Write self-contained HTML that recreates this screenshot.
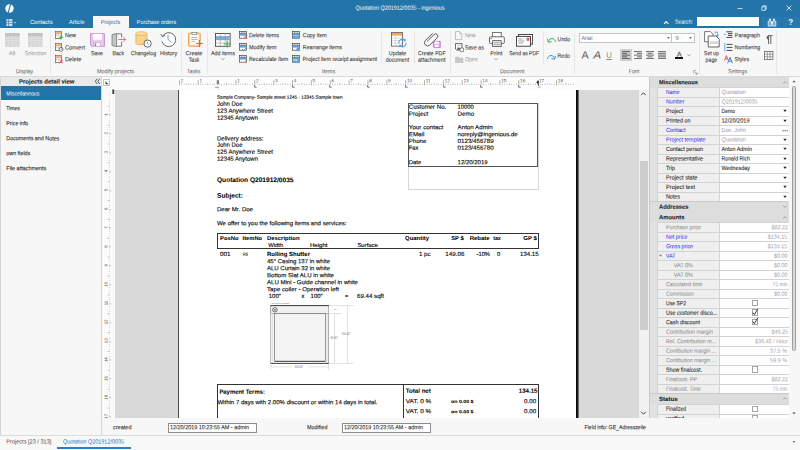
<!DOCTYPE html>
<html><head><meta charset="utf-8"><title>Quotation Q201912/0035 - ingenious</title>
<style>
html,body{margin:0;padding:0;width:800px;height:450px;overflow:hidden;background:#f4f4f4;font-family:"Liberation Sans", sans-serif;}
#app{position:relative;width:800px;height:450px;overflow:hidden;}
#app div,#app svg{position:absolute;box-sizing:border-box;}
#app .t{white-space:nowrap;}
</style></head><body><div id="app">
<div style="left:0px;top:0px;width:800px;height:28px;background:#2374a9;"></div>
<svg style="left:5px;top:3.5px" width="9" height="9" viewBox="0 0 9 9"><ellipse cx="4.5" cy="4.5" rx="4.2" ry="4.2" fill="#fff"/><path d="M5.6 0 L3.2 9" stroke="#2374a9" stroke-width="1.1"/></svg>
<div class="t" style="top:4px;height:7.8px;line-height:7.8px;font-size:6.0px;color:#fff;left:300px;width:200px;text-align:center;transform:translate(0px,0.85px) scaleX(0.9043) rotate(0.03deg);transform-origin:50% 50%;">Quotation Q201912/0035 - ingenious</div>
<svg style="left:736px;top:4px" width="8" height="8" viewBox="0 0 8 8"><path d="M1.5 4.5H6.5" stroke="#fff" stroke-width=".7"/></svg>
<svg style="left:760px;top:4px" width="8" height="8" viewBox="0 0 8 8"><path d="M1.8 2.8H5.2V6.4H1.8Z M2.8 2.8V1.8H6.2V5.4H5.2" fill="none" stroke="#fff" stroke-width=".7"/></svg>
<svg style="left:784.5px;top:4px" width="8" height="8" viewBox="0 0 8 8"><path d="M1.6 1.6L6.4 6.4M6.4 1.6L1.6 6.4" stroke="#fff" stroke-width=".8"/></svg>
<svg style="left:662px;top:18.5px" width="8" height="7" viewBox="0 0 8 7"><path d="M2 4.8L4.2 2.6L6.4 4.8" fill="none" stroke="#fff" stroke-width="1.1"/></svg>
<div class="t" style="top:18px;height:7.8px;line-height:7.8px;font-size:6.0px;color:#fff;left:675px;transform:translate(0px,0.85px) scaleX(0.8701) rotate(0.03deg);transform-origin:0 50%;">Search:</div>
<div style="left:697px;top:17.2px;width:61.5px;height:9.2px;background:#fff;"></div>
<div style="left:762px;top:17px;width:19px;height:10.5px;background:#2a79ae;"></div>
<div style="left:783px;top:17px;width:17px;height:10.5px;background:#2a79ae;"></div>
<svg style="left:766.5px;top:17.6px" width="10" height="9.5" viewBox="0 0 10 9.5"><path d="M2.2 .8h1.8v1.8h-1.8zM6 .8h1.8v1.8h-1.8z" fill="#fff"/><path d="M1.2 3.1h3.2v5h-3.2zM5.6 3.1h3.2v5h-3.2z" fill="rgba(255,255,255,.35)" stroke="#fff" stroke-width=".7"/><path d="M4.4 4h1.2v1.6h-1.2z" fill="#fff"/></svg>
<div class="t" style="top:17px;height:10.4px;line-height:10.4px;font-size:8px;color:#fff;font-weight:bold;left:690px;width:200px;text-align:center;transform:translate(0.6px,0.75px) rotate(0.03deg);transform-origin:50% 50%;">?</div>
<svg style="left:5.5px;top:17.5px" width="11" height="9" viewBox="0 0 11 9"><rect x=".5" y="1.1" width="5.9" height="6.9" fill="#d9e1e8"/><path d="M2.5 1.1V8M.5 3.3H6.4M.5 5.6H6.4" stroke="#2374a9" stroke-width=".6"/><path d="M8 4.3h2l-1 1.1z" fill="#fff"/></svg>
<div style="left:92.5px;top:16px;width:36.5px;height:12.5px;background:#f7f7f7;"></div>
<div class="t" style="top:19px;height:7.8px;line-height:7.8px;font-size:6.0px;color:#fff;left:30px;transform:translate(0px,0.05px) scaleX(0.9499) rotate(0.03deg);transform-origin:0 50%;">Contacts</div>
<div class="t" style="top:19px;height:7.8px;line-height:7.8px;font-size:6.0px;color:#fff;left:69px;transform:translate(0px,0.05px) scaleX(0.9297) rotate(0.03deg);transform-origin:0 50%;">Article</div>
<div class="t" style="top:19px;height:7.8px;line-height:7.8px;font-size:6.0px;color:#2a6fa5;left:100px;transform:translate(0.7px,0.05px) scaleX(0.8991) rotate(0.03deg);transform-origin:0 50%;">Projects</div>
<div class="t" style="top:19px;height:7.8px;line-height:7.8px;font-size:6.0px;color:#fff;left:136px;transform:translate(0.8px,0.05px) scaleX(0.8971) rotate(0.03deg);transform-origin:0 50%;">Purchase orders</div>
<div style="left:0px;top:28px;width:800px;height:48.5px;background:#f7f7f7;"></div>
<div style="left:0px;top:76px;width:800px;height:1px;background:#d9dadb;"></div>
<div style="left:49.8px;top:30.5px;width:1px;height:43px;background:#e6e6e6;"></div>
<div style="left:181.10000000000002px;top:30.5px;width:1px;height:43px;background:#e6e6e6;"></div>
<div style="left:206.70000000000002px;top:30.5px;width:1px;height:43px;background:#e6e6e6;"></div>
<div style="left:449.90000000000003px;top:30.5px;width:1px;height:43px;background:#e6e6e6;"></div>
<div style="left:573.9px;top:30.5px;width:1px;height:43px;background:#e6e6e6;"></div>
<div style="left:699.0999999999999px;top:30.5px;width:1px;height:43px;background:#e6e6e6;"></div>
<div style="left:776.3px;top:30.5px;width:1px;height:43px;background:#e6e6e6;"></div>
<div style="left:381.2px;top:30.5px;width:1px;height:33.5px;background:#e6e6e6;"></div>
<div style="left:413.90000000000003px;top:30.5px;width:1px;height:33.5px;background:#e6e6e6;"></div>
<div style="left:542.8px;top:30.5px;width:1px;height:33.5px;background:#e6e6e6;"></div>
<div class="t" style="top:68px;height:7.8px;line-height:7.8px;font-size:6.0px;color:#555;left:-76px;width:200px;text-align:center;transform:translate(0.6px,0.15px) scaleX(0.8635) rotate(0.03deg);transform-origin:50% 50%;">Display</div>
<div class="t" style="top:68px;height:7.8px;line-height:7.8px;font-size:6.0px;color:#555;left:15px;width:200px;text-align:center;transform:translate(0.5px,0.15px) scaleX(0.9217) rotate(0.03deg);transform-origin:50% 50%;">Modify projects</div>
<div class="t" style="top:68px;height:7.8px;line-height:7.8px;font-size:6.0px;color:#555;left:93px;width:200px;text-align:center;transform:translate(0.8px,0.15px) scaleX(0.8733) rotate(0.03deg);transform-origin:50% 50%;">Tasks</div>
<div class="t" style="top:68px;height:7.8px;line-height:7.8px;font-size:6.0px;color:#555;left:228px;width:200px;text-align:center;transform:translate(0.6px,0.15px) scaleX(0.886) rotate(0.03deg);transform-origin:50% 50%;">Items</div>
<div class="t" style="top:68px;height:7.8px;line-height:7.8px;font-size:6.0px;color:#555;left:412px;width:200px;text-align:center;transform:translate(0.2px,0.15px) scaleX(0.8918) rotate(0.03deg);transform-origin:50% 50%;">Document</div>
<div class="t" style="top:68px;height:7.8px;line-height:7.8px;font-size:6.0px;color:#555;left:534px;width:200px;text-align:center;transform:translate(0px,0.15px) scaleX(0.8822) rotate(0.03deg);transform-origin:50% 50%;">Font</div>
<div class="t" style="top:68px;height:7.8px;line-height:7.8px;font-size:6.0px;color:#555;left:637px;width:200px;text-align:center;transform:translate(0.6px,0.15px) scaleX(0.8761) rotate(0.03deg);transform-origin:50% 50%;">Settings</div>
<svg style="left:5px;top:33px" width="14.6" height="14" viewBox="0 0 14.6 14"><rect x="0" y="0" width="14.6" height="14" fill="#d4d4d4"/><rect x="0" y="0" width="14.6" height="3.08" fill="#c3c3c3"/><path d="M3.65 3.08V14" stroke="#e9e9e9" stroke-width=".5"/><path d="M7.3 3.08V14" stroke="#e9e9e9" stroke-width=".5"/><path d="M10.95 3.08V14" stroke="#e9e9e9" stroke-width=".5"/><path d="M0 5.264H14.6" stroke="#e9e9e9" stroke-width=".5"/><path d="M0 7.448H14.6" stroke="#e9e9e9" stroke-width=".5"/><path d="M0 9.632H14.6" stroke="#e9e9e9" stroke-width=".5"/><path d="M0 11.816H14.6" stroke="#e9e9e9" stroke-width=".5"/></svg>
<svg style="left:28px;top:33px" width="14.6" height="14" viewBox="0 0 14.6 14"><rect x="0" y="0" width="14.6" height="14" fill="#d4d4d4"/><rect x="0" y="0" width="14.6" height="3.08" fill="#c3c3c3"/><path d="M3.65 3.08V14" stroke="#e9e9e9" stroke-width=".5"/><path d="M7.3 3.08V14" stroke="#e9e9e9" stroke-width=".5"/><path d="M10.95 3.08V14" stroke="#e9e9e9" stroke-width=".5"/><path d="M0 5.264H14.6" stroke="#e9e9e9" stroke-width=".5"/><path d="M0 7.448H14.6" stroke="#e9e9e9" stroke-width=".5"/><path d="M0 9.632H14.6" stroke="#e9e9e9" stroke-width=".5"/><path d="M0 11.816H14.6" stroke="#e9e9e9" stroke-width=".5"/></svg>
<div class="t" style="top:50px;height:7.8px;line-height:7.8px;font-size:6.0px;color:#8e8e8e;left:-88px;width:200px;text-align:center;transform:translate(0px,0.35px) scaleX(0.9742) rotate(0.03deg);transform-origin:50% 50%;">All</div>
<div class="t" style="top:50px;height:7.8px;line-height:7.8px;font-size:6.0px;color:#8e8e8e;left:-65px;width:200px;text-align:center;transform:translate(0.5px,0.35px) scaleX(0.8709) rotate(0.03deg);transform-origin:50% 50%;">Selection</div>
<svg style="left:55px;top:31px" width="9" height="9" viewBox="0 0 9 9"><rect x=".4" y=".4" width="6.2" height="7.2" fill="#fff" stroke="#555" stroke-width=".7"/><rect x=".8" y=".8" width="5.4" height="2" fill="#f6b26b"/><path d="M.8 3.1H6.2M.8 4.8H4" stroke="#999" stroke-width=".5"/><path d="M6 4.2V8.4M3.9 6.3H8.1" stroke="#3db35a" stroke-width="1.1"/></svg>
<svg style="left:55px;top:43px" width="9" height="9" viewBox="0 0 9 9"><rect x=".4" y=".4" width="6.2" height="7.2" fill="#fff" stroke="#555" stroke-width=".7"/><rect x=".8" y=".8" width="5.4" height="2" fill="#f6b26b"/><path d="M.8 3.1H6.2M.8 4.8H4" stroke="#999" stroke-width=".5"/><circle cx="6" cy="6.3" r="2" fill="#fff" stroke="#444" stroke-width=".7"/><path d="M6 5.2V6.4H7" stroke="#444" stroke-width=".5" fill="none"/></svg>
<svg style="left:55px;top:54.8px" width="9" height="9" viewBox="0 0 9 9"><rect x=".4" y=".4" width="6.2" height="7.2" fill="#fff" stroke="#555" stroke-width=".7"/><rect x=".8" y=".8" width="5.4" height="2" fill="#f6b26b"/><path d="M.8 3.1H6.2M.8 4.8H4" stroke="#999" stroke-width=".5"/><path d="M4.4 4.8L7.8 8.2M7.8 4.8L4.4 8.2" stroke="#e8484e" stroke-width="1"/></svg>
<div class="t" style="top:32px;height:7.8px;line-height:7.8px;font-size:6.0px;color:#333;left:65px;transform:translate(0px,0.25px) scaleX(0.9155) rotate(0.03deg);transform-origin:0 50%;-webkit-text-stroke:.08px #333;">New</div>
<div class="t" style="top:44px;height:7.8px;line-height:7.8px;font-size:6.0px;color:#333;left:65px;transform:translate(0px,0.55px) scaleX(0.9517) rotate(0.03deg);transform-origin:0 50%;-webkit-text-stroke:.08px #333;">Convert</div>
<div class="t" style="top:56px;height:7.8px;line-height:7.8px;font-size:6.0px;color:#333;left:65px;transform:translate(0px,0.35px) scaleX(0.9514) rotate(0.03deg);transform-origin:0 50%;-webkit-text-stroke:.08px #333;">Delete</div>
<svg style="left:90px;top:32.6px" width="15" height="14.4" viewBox="0 0 15 14.4"><path d="M.6 .6H14.4V13.8H2.4L.6 12Z" fill="#e9c9ec" stroke="#c98fd0" stroke-width="1"/><rect x="3" y=".8" width="9" height="6" fill="#fff"/><rect x="3.6" y="9.4" width="6.6" height="4.2" fill="#fff" stroke="#c98fd0" stroke-width=".6"/><rect x="4.6" y="10.4" width="1.6" height="2.6" fill="#8c8c8c"/></svg>
<div class="t" style="top:50px;height:7.8px;line-height:7.8px;font-size:6.0px;color:#333;left:-3px;width:200px;text-align:center;transform:translate(0px,0.35px) scaleX(0.8913) rotate(0.03deg);transform-origin:50% 50%;-webkit-text-stroke:.08px #333;">Save</div>
<svg style="left:110.6px;top:32.6px" width="16" height="14.4" viewBox="0 0 16 14.4"><path d="M1 1.6L5.6 .6V13.8L1 12.6Z" fill="#c6c6c6" stroke="#6a6a6a" stroke-width=".7"/><path d="M5.6 .9H10.6V4.4M10.6 8.6V13.2H5.6" fill="#fff" stroke="#555" stroke-width=".8"/><path d="M7.4 6.5H14.6M12.4 4.3L14.8 6.5L12.4 8.7" fill="none" stroke="#ee5d63" stroke-width=".9"/></svg>
<div class="t" style="top:50px;height:7.8px;line-height:7.8px;font-size:6.0px;color:#333;left:18px;width:200px;text-align:center;transform:translate(0.3px,0.35px) scaleX(0.8618) rotate(0.03deg);transform-origin:50% 50%;-webkit-text-stroke:.08px #333;">Back</div>
<svg style="left:135.4px;top:31.4px" width="17" height="17" viewBox="0 0 17 17"><path d="M.9 2.6V12.4C.9 14.2 11.9 14.2 11.9 12.4V2.6Z" fill="#f8d48a" stroke="#eaa850" stroke-width=".8"/><ellipse cx="6.4" cy="2.6" rx="5.5" ry="1.9" fill="#fbe0a6" stroke="#eaa850" stroke-width=".8"/><circle cx="12.6" cy="12.6" r="3.6" fill="#fff" stroke="#555" stroke-width=".9"/><path d="M12.4 10.6V12.8L13.8 13.8" fill="none" stroke="#4a98d8" stroke-width=".8"/></svg>
<div class="t" style="top:50px;height:7.8px;line-height:7.8px;font-size:6.0px;color:#333;left:43px;width:200px;text-align:center;transform:translate(0.4px,0.35px) scaleX(0.8784) rotate(0.03deg);transform-origin:50% 50%;-webkit-text-stroke:.08px #333;">Changelog</div>
<svg style="left:160.4px;top:31.4px" width="17" height="17" viewBox="0 0 17 17"><path d="M2.6 5.2A7 7 0 1 1 2 10.6" fill="#fff" stroke="#555" stroke-width=".9"/><path d="M.8 3.2L2.6 5.6L5.2 4.4" fill="none" stroke="#555" stroke-width=".9"/><path d="M8 3.8V8.2L11.2 11.6" fill="none" stroke="#4a98d8" stroke-width=".9"/></svg>
<div class="t" style="top:50px;height:7.8px;line-height:7.8px;font-size:6.0px;color:#333;left:68px;width:200px;text-align:center;transform:translate(0.6px,0.35px) scaleX(0.9212) rotate(0.03deg);transform-origin:50% 50%;-webkit-text-stroke:.08px #333;">History</div>
<svg style="left:187.6px;top:32.4px" width="16" height="15.6" viewBox="0 0 16 15.6"><rect x=".6" y="1.2" width="11.6" height="13" rx=".6" fill="#fbe3bd" stroke="#ef9a3d" stroke-width="1"/><rect x="2.2" y="2.8" width="8.4" height="10" fill="#fff"/><rect x="4" y=".3" width="4.8" height="2.2" fill="#fff" stroke="#666" stroke-width=".6"/><path d="M3.4 5.4H9.4M3.4 7.4H9.4M3.4 9.4H7" stroke="#9a9a9a" stroke-width=".8"/><path d="M11.4 8V15M7.9 11.5H14.9" stroke="#3db35a" stroke-width="1.2"/></svg>
<div class="t" style="top:50px;height:7.8px;line-height:7.8px;font-size:6.0px;color:#333;left:94px;width:200px;text-align:center;transform:translate(0px,0.35px) scaleX(0.9436) rotate(0.03deg);transform-origin:50% 50%;-webkit-text-stroke:.08px #333;">Create</div>
<div class="t" style="top:56px;height:7.8px;line-height:7.8px;font-size:6.0px;color:#333;left:94px;width:200px;text-align:center;transform:translate(0px,0.65px) scaleX(0.8506) rotate(0.03deg);transform-origin:50% 50%;-webkit-text-stroke:.08px #333;">Task</div>
<svg style="left:215px;top:32.8px" width="17" height="15" viewBox="0 0 17 15"><rect x=".5" y=".5" width="14.6" height="12.8" fill="#fff" stroke="#4a4a4a" stroke-width=".9"/><rect x="1" y="3.4" width="13.6" height="3.4" fill="#6fb0e8"/><path d="M.5 3.4H15M.5 6.8H15M.5 10H15M5.4 .5V13.3M10.2 .5V13.3" stroke="#8a8a8a" stroke-width=".5" fill="none"/><path d="M12.2 7.4V14.6M8.6 11H15.8" stroke="#3db35a" stroke-width="1.2"/></svg>
<div class="t" style="top:50px;height:7.8px;line-height:7.8px;font-size:6.0px;color:#333;left:122px;width:200px;text-align:center;transform:translate(0.9px,0.35px) scaleX(0.8993) rotate(0.03deg);transform-origin:50% 50%;-webkit-text-stroke:.08px #333;">Add items</div>
<svg style="left:219.9px;top:57px" width="6" height="4" viewBox="0 0 6 4"><path d="M1.4 1.2L3 2.8L4.6 1.2" fill="none" stroke="#666" stroke-width=".6"/></svg>
<svg style="left:238.8px;top:31px" width="9.5" height="9" viewBox="0 0 9.5 9"><rect x=".4" y=".4" width="7.2" height="6.8" fill="#fff" stroke="#444" stroke-width=".7"/><rect x=".8" y="2.4" width="6.4" height="2.2" fill="#5aa2e0"/><path d="M.4 2.3H7.6M2.8 .4V2.3M5.2 .4V2.3" stroke="#444" stroke-width=".5"/><path d="M5 4.6L8.2 7.8M8.2 4.6L5 7.8" stroke="#e8484e" stroke-width=".9"/></svg>
<svg style="left:238.8px;top:43px" width="9.5" height="9" viewBox="0 0 9.5 9"><rect x=".4" y=".4" width="7.2" height="6.8" fill="#fff" stroke="#444" stroke-width=".7"/><rect x=".8" y="2.4" width="6.4" height="2.2" fill="#5aa2e0"/><path d="M.4 2.3H7.6M2.8 .4V2.3M5.2 .4V2.3" stroke="#444" stroke-width=".5"/><path d="M3.2 6L4.6 7.6L7.8 4" fill="none" stroke="#4a98d8" stroke-width="1"/></svg>
<svg style="left:238.8px;top:54.8px" width="9.5" height="9" viewBox="0 0 9.5 9"><rect x=".4" y=".4" width="7.2" height="6.8" fill="#fff" stroke="#444" stroke-width=".7"/><rect x=".8" y="2.4" width="6.4" height="2.2" fill="#5aa2e0"/><path d="M.4 2.3H7.6M2.8 .4V2.3M5.2 .4V2.3" stroke="#444" stroke-width=".5"/><path d="M5.4 8.2L6.4 4.8L7.6 8.2Z" fill="#ef9a3d"/></svg>
<div class="t" style="top:32px;height:7.8px;line-height:7.8px;font-size:6.0px;color:#333;left:249px;transform:translate(0px,0.25px) scaleX(0.8993) rotate(0.03deg);transform-origin:0 50%;-webkit-text-stroke:.08px #333;">Delete items</div>
<div class="t" style="top:44px;height:7.8px;line-height:7.8px;font-size:6.0px;color:#333;left:249px;transform:translate(0px,0.35px) scaleX(0.8994) rotate(0.03deg);transform-origin:0 50%;-webkit-text-stroke:.08px #333;">Modify item</div>
<div class="t" style="top:56px;height:7.8px;line-height:7.8px;font-size:6.0px;color:#333;left:249px;transform:translate(0px,0.05px) scaleX(0.8859) rotate(0.03deg);transform-origin:0 50%;-webkit-text-stroke:.08px #333;">Recalculate item</div>
<svg style="left:292px;top:31px" width="9.5" height="9" viewBox="0 0 9.5 9"><rect x=".4" y=".4" width="7.2" height="6.8" fill="#fff" stroke="#444" stroke-width=".7"/><rect x=".8" y="2.4" width="6.4" height="2.2" fill="#5aa2e0"/><path d="M.4 2.3H7.6M2.8 .4V2.3M5.2 .4V2.3" stroke="#444" stroke-width=".5"/><rect x="1" y="5" width="6.4" height="1.8" fill="#5aa2e0"/></svg>
<svg style="left:292px;top:43px" width="9.5" height="9" viewBox="0 0 9.5 9"><rect x=".4" y=".4" width="7.2" height="6.8" fill="#fff" stroke="#444" stroke-width=".7"/><rect x=".8" y="2.4" width="6.4" height="2.2" fill="#5aa2e0"/><path d="M.4 2.3H7.6M2.8 .4V2.3M5.2 .4V2.3" stroke="#444" stroke-width=".5"/><circle cx="6.2" cy="6.4" r="1.9" fill="#5aa2e0"/></svg>
<svg style="left:292px;top:54.8px" width="9.5" height="9" viewBox="0 0 9.5 9"><rect x=".4" y=".4" width="7.2" height="6.8" fill="#fff" stroke="#444" stroke-width=".7"/><rect x=".8" y="2.4" width="6.4" height="2.2" fill="#5aa2e0"/><path d="M.4 2.3H7.6M2.8 .4V2.3M5.2 .4V2.3" stroke="#444" stroke-width=".5"/><circle cx="6.2" cy="6.4" r="1.9" fill="#5aa2e0"/><rect x="1" y="5.4" width="3" height="1.6" fill="#5aa2e0"/></svg>
<div class="t" style="top:32px;height:7.8px;line-height:7.8px;font-size:6.0px;color:#333;left:302px;transform:translate(0.8px,0.25px) scaleX(0.8884) rotate(0.03deg);transform-origin:0 50%;-webkit-text-stroke:.08px #333;">Copy item</div>
<div class="t" style="top:44px;height:7.8px;line-height:7.8px;font-size:6.0px;color:#333;left:302px;transform:translate(0.8px,0.35px) scaleX(0.8837) rotate(0.03deg);transform-origin:0 50%;-webkit-text-stroke:.08px #333;">Rearrange items</div>
<div class="t" style="top:56px;height:7.8px;line-height:7.8px;font-size:6.0px;color:#333;left:302px;transform:translate(0.8px,0.05px) scaleX(0.8877) rotate(0.03deg);transform-origin:0 50%;-webkit-text-stroke:.08px #333;">Project item receipt assignment</div>
<svg style="left:390.6px;top:32px" width="16.5" height="16.5" viewBox="0 0 16.5 16.5"><rect x=".5" y=".5" width="11" height="13.6" fill="#fff" stroke="#555" stroke-width=".8"/><rect x="1" y="1" width="10" height="2.6" fill="#f6a55a"/><path d="M1 6H11M1 8.6H11M1 11.2H11M4.4 3.8V13.8" stroke="#b9b9b9" stroke-width=".5"/><path d="M7.8 11.4A3.6 3.6 0 0 1 14 8.4M15 10.6A3.6 3.6 0 0 1 8.8 13.6" fill="none" stroke="#4aa3e6" stroke-width="1.1"/><path d="M14.6 6.6V9.2H12zM8.2 15.4V12.8H10.8z" fill="#4aa3e6"/></svg>
<div class="t" style="top:50px;height:7.8px;line-height:7.8px;font-size:6.0px;color:#333;left:297px;width:200px;text-align:center;transform:translate(0.5px,0.35px) scaleX(0.8988) rotate(0.03deg);transform-origin:50% 50%;-webkit-text-stroke:.08px #333;">Update</div>
<div class="t" style="top:56px;height:7.8px;line-height:7.8px;font-size:6.0px;color:#333;left:297px;width:200px;text-align:center;transform:translate(0.5px,0.65px) scaleX(0.8953) rotate(0.03deg);transform-origin:50% 50%;-webkit-text-stroke:.08px #333;">document</div>
<svg style="left:424px;top:32px" width="17.5" height="16.5" viewBox="0 0 17.5 16.5"><path d="M3.2 9.4L10 2.6A2.2 2.2 0 0 1 13.2 5.8L5.6 13.2A3.2 3.2 0 0 1 1.2 8.6L8.6 1.4" fill="none" stroke="#5a5a5a" stroke-width="1"/><path d="M9.4 9.4H16.2V15.6H10.2L9.4 14.8Z" fill="#e5bde9" stroke="#b85cc2" stroke-width=".8"/><rect x="10.8" y="9.6" width="4" height="2" fill="#fff"/><rect x="11" y="13" width="3.4" height="2.2" fill="#fff"/></svg>
<div class="t" style="top:50px;height:7.8px;line-height:7.8px;font-size:6.0px;color:#333;left:331px;width:200px;text-align:center;transform:translate(0.8px,0.35px) scaleX(0.871) rotate(0.03deg);transform-origin:50% 50%;-webkit-text-stroke:.08px #333;">Create PDF</div>
<div class="t" style="top:56px;height:7.8px;line-height:7.8px;font-size:6.0px;color:#333;left:331px;width:200px;text-align:center;transform:translate(0.8px,0.65px) scaleX(0.9297) rotate(0.03deg);transform-origin:50% 50%;-webkit-text-stroke:.08px #333;">attachment</div>
<svg style="left:455px;top:31px" width="8" height="9.5" viewBox="0 0 8 9.5"><path d="M.5 .5H4.6L6.8 2.7V8.6H.5Z" fill="#f6f6f6" stroke="#ababab" stroke-width=".7"/><path d="M4.6 .5V2.7H6.8" fill="none" stroke="#ababab" stroke-width=".6"/></svg>
<svg style="left:454.6px;top:43px" width="9.5" height="9.5" viewBox="0 0 9.5 9.5"><path d="M.5 .5H7V7H1.6L.5 6Z" fill="#fff" stroke="#444" stroke-width=".8"/><rect x="2" y=".8" width="3.6" height="2.6" fill="#ddd"/><rect x="2.2" y="4.6" width="2.8" height="2.2" fill="#666"/><circle cx="6.8" cy="6.8" r="2" fill="#fff" stroke="#444" stroke-width=".7"/></svg>
<svg style="left:455px;top:55.6px" width="9" height="7.5" viewBox="0 0 9 7.5"><path d="M.4 1H3.2L4 2H8V6.8H.4Z" fill="#c9c9c9" stroke="#b5b5b5" stroke-width=".5"/></svg>
<div class="t" style="top:32px;height:7.8px;line-height:7.8px;font-size:6.0px;color:#8e8e8e;left:465px;transform:translate(0px,0.25px) scaleX(0.8739) rotate(0.03deg);transform-origin:0 50%;">New</div>
<div class="t" style="top:44px;height:7.8px;line-height:7.8px;font-size:6.0px;color:#333;left:465px;transform:translate(0px,0.55px) scaleX(0.8669) rotate(0.03deg);transform-origin:0 50%;-webkit-text-stroke:.08px #333;">Save as</div>
<div class="t" style="top:56px;height:7.8px;line-height:7.8px;font-size:6.0px;color:#8e8e8e;left:465px;transform:translate(0px,0.35px) scaleX(0.8511) rotate(0.03deg);transform-origin:0 50%;">Open</div>
<svg style="left:488.6px;top:32px" width="16.5" height="15.5" viewBox="0 0 16.5 15.5"><rect x="3.6" y=".5" width="8.6" height="5" fill="#fff" stroke="#555" stroke-width=".8"/><rect x=".5" y="4.8" width="14.8" height="6.6" rx=".8" fill="#fff" stroke="#555" stroke-width=".9"/><rect x="3.6" y="8.6" width="8.6" height="6" fill="#e4e4e4" stroke="#555" stroke-width=".8"/><path d="M5 10.6H10.8M5 12.6H10.8" stroke="#9a9a9a" stroke-width=".7"/><rect x="1.6" y="6" width="1.2" height="1.2" fill="#2f86d6"/></svg>
<div class="t" style="top:50px;height:7.8px;line-height:7.8px;font-size:6.0px;color:#333;left:396px;width:200px;text-align:center;transform:translate(0.3px,0.35px) scaleX(0.9722) rotate(0.03deg);transform-origin:50% 50%;-webkit-text-stroke:.08px #333;">Print</div>
<svg style="left:493.2px;top:57px" width="6" height="4" viewBox="0 0 6 4"><path d="M1.4 1.2L3 2.8L4.6 1.2" fill="none" stroke="#666" stroke-width=".6"/></svg>
<svg style="left:515.6px;top:33.6px" width="17.5" height="13.5" viewBox="0 0 17.5 13.5"><rect x="2.6" y=".5" width="14" height="9.6" fill="#fff" stroke="#333" stroke-width=".9"/><rect x=".5" y="2.4" width="14" height="9.8" fill="#fff" stroke="#333" stroke-width=".9"/><path d="M2.4 5H6.6M2.4 7H8.4M2.4 9H7.4" stroke="#8a8a8a" stroke-width=".8"/><rect x="10.6" y="3.6" width="2.8" height="3.2" fill="#f0585d"/></svg>
<div class="t" style="top:50px;height:7.8px;line-height:7.8px;font-size:6.0px;color:#333;left:424px;width:200px;text-align:center;transform:translate(0.2px,0.35px) scaleX(0.8406) rotate(0.03deg);transform-origin:50% 50%;-webkit-text-stroke:.08px #333;">Send as PDF</div>
<svg style="left:546.6px;top:36.4px" width="10" height="8" viewBox="0 0 10 8"><path d="M1.4 5.6C2.4 1.6 7.6 1.2 8.6 6" fill="none" stroke="#38b060" stroke-width="1"/><path d="M.6 2.8L1.2 6.2L4.6 5.6" fill="none" stroke="#38b060" stroke-width="1"/></svg>
<svg style="left:546.0px;top:52.6px" width="10" height="8" viewBox="0 0 10 8"><path d="M8.6 5.6C7.6 1.6 2.4 1.2 1.4 6" fill="none" stroke="#3c95dc" stroke-width="1"/><path d="M9.4 2.8L8.8 6.2L5.4 5.6" fill="none" stroke="#3c95dc" stroke-width="1"/></svg>
<div class="t" style="top:36px;height:7.8px;line-height:7.8px;font-size:6.0px;color:#333;left:557px;transform:translate(0.6px,0.35px) scaleX(0.8784) rotate(0.03deg);transform-origin:0 50%;-webkit-text-stroke:.08px #333;">Undo</div>
<div class="t" style="top:52px;height:7.8px;line-height:7.8px;font-size:6.0px;color:#333;left:557px;transform:translate(0.6px,0.65px) scaleX(0.8645) rotate(0.03deg);transform-origin:0 50%;-webkit-text-stroke:.08px #333;">Redo</div>
<div style="left:579px;top:33.4px;width:93.4px;height:9.8px;background:#fff;border:.7px solid #c4c4c4;"></div>
<div style="left:672.4px;top:33.4px;width:22.6px;height:9.8px;background:#fff;border:.7px solid #c4c4c4;border-left:none;"></div>
<div class="t" style="top:35px;height:7.8px;line-height:7.8px;font-size:6.0px;color:#6c6c6c;left:581px;transform:translate(0.4px,0.05px) scaleX(0.9155) rotate(0.03deg);transform-origin:0 50%;">Arial</div>
<div class="t" style="top:35px;height:7.8px;line-height:7.8px;font-size:6.0px;color:#6c6c6c;left:675px;transform:translate(0.4px,0.05px) scaleX(0.957) rotate(0.03deg);transform-origin:0 50%;">9</div>
<svg style="left:665.6px;top:36.4px" width="5" height="4" viewBox="0 0 5 4"><path d="M1 1.2H4L2.5 2.8Z" fill="#444"/></svg>
<svg style="left:688.2px;top:36.4px" width="5" height="4" viewBox="0 0 5 4"><path d="M1 1.2H4L2.5 2.8Z" fill="#444"/></svg>
<div class="t" style="top:48px;height:13.78px;line-height:13.78px;font-size:10.6px;color:#1a1a1a;left:485px;width:200px;text-align:center;transform:translate(0px,0.46px) scaleX(1.0172) rotate(0.03deg);transform-origin:50% 50%;-webkit-text-stroke:.2px #f7f7f7;">A</div>
<div class="t" style="top:48px;height:13.78px;line-height:13.78px;font-size:10.6px;color:#1a1a1a;font-style:italic;left:497px;width:200px;text-align:center;transform:translate(0.4px,0.46px) scaleX(1.0737) rotate(0.03deg);transform-origin:50% 50%;-webkit-text-stroke:.2px #f7f7f7;">A</div>
<div class="t" style="top:49px;height:10.92px;line-height:10.92px;font-size:8.4px;color:#8a8a8a;left:509px;width:200px;text-align:center;transform:translate(0px,0.89px) scaleX(0.9237) rotate(0.03deg);transform-origin:50% 50%;text-decoration:underline;">U</div>
<div style="left:620px;top:49px;width:12px;height:12px;background:#cfcfcf;"></div>
<svg style="left:622px;top:51.2px" width="9" height="8" viewBox="0 0 9 8"><path d="M0 0.6H8" stroke="#3a3a3a" stroke-width=".75"/><path d="M0 2.35H5" stroke="#3a3a3a" stroke-width=".75"/><path d="M0 4.1H8" stroke="#3a3a3a" stroke-width=".75"/><path d="M0 5.85H5" stroke="#3a3a3a" stroke-width=".75"/><path d="M0 7.6H8" stroke="#3a3a3a" stroke-width=".75"/></svg>
<svg style="left:633.8px;top:51.2px" width="9" height="8" viewBox="0 0 9 8"><path d="M0 0.6H8" stroke="#3a3a3a" stroke-width=".75"/><path d="M3 2.35H8" stroke="#3a3a3a" stroke-width=".75"/><path d="M0 4.1H8" stroke="#3a3a3a" stroke-width=".75"/><path d="M3 5.85H8" stroke="#3a3a3a" stroke-width=".75"/><path d="M0 7.6H8" stroke="#3a3a3a" stroke-width=".75"/></svg>
<svg style="left:645.8px;top:51.2px" width="9" height="8" viewBox="0 0 9 8"><path d="M0 0.6H8" stroke="#3a3a3a" stroke-width=".75"/><path d="M1.5 2.35H6.5" stroke="#3a3a3a" stroke-width=".75"/><path d="M0 4.1H8" stroke="#3a3a3a" stroke-width=".75"/><path d="M1.5 5.85H6.5" stroke="#3a3a3a" stroke-width=".75"/><path d="M0 7.6H8" stroke="#3a3a3a" stroke-width=".75"/></svg>
<svg style="left:657.8px;top:51.2px" width="9" height="8" viewBox="0 0 9 8"><path d="M0 0.6H8" stroke="#3a3a3a" stroke-width=".75"/><path d="M0 2.35H8" stroke="#3a3a3a" stroke-width=".75"/><path d="M0 4.1H8" stroke="#3a3a3a" stroke-width=".75"/><path d="M0 5.85H8" stroke="#3a3a3a" stroke-width=".75"/><path d="M0 7.6H8" stroke="#3a3a3a" stroke-width=".75"/></svg>
<div class="t" style="top:49px;height:9.36px;line-height:9.36px;font-size:7.2px;color:#3a3a3a;left:579px;width:200px;text-align:center;transform:translate(0.2px,0.87px) scaleX(1.0423) rotate(0.03deg);transform-origin:50% 50%;">A</div>
<div style="left:675.2px;top:57px;width:8px;height:2.2px;background:#111;"></div>
<svg style="left:686px;top:53px" width="6" height="4" viewBox="0 0 6 4"><path d="M1.4 1.2L3 2.8L4.6 1.2" fill="none" stroke="#666" stroke-width=".6"/></svg>
<svg style="left:692.6px;top:69.6px" width="5" height="5" viewBox="0 0 5 5"><path d="M.6 3.2V.6H3.2M2 2L4.2 4.2M4.2 2.4V4.2H2.4" fill="none" stroke="#666" stroke-width=".5"/></svg>
<svg style="left:704px;top:31.4px" width="17" height="17" viewBox="0 0 17 17"><path d="M.6 .6H6.4L9 3.2V10.8H.6Z" fill="#fff" stroke="#555" stroke-width=".8"/><path d="M4.2 5H12L15.2 8.2V16H4.2Z" fill="#fff" stroke="#555" stroke-width=".9"/><rect x="5.4" y="10.4" width="8.6" height="2.4" fill="#d4d4d4"/><path d="M10.2 1.2H13.4V5.2M12 3.8L13.4 5.4L14.8 3.8" fill="none" stroke="#3c95dc" stroke-width=".8"/></svg>
<div class="t" style="top:50px;height:7.8px;line-height:7.8px;font-size:6.0px;color:#333;left:611px;width:200px;text-align:center;transform:translate(0.4px,0.35px) scaleX(0.8526) rotate(0.03deg);transform-origin:50% 50%;-webkit-text-stroke:.08px #333;">Set up</div>
<div class="t" style="top:56px;height:7.8px;line-height:7.8px;font-size:6.0px;color:#333;left:611px;width:200px;text-align:center;transform:translate(0.4px,0.65px) scaleX(0.8683) rotate(0.03deg);transform-origin:50% 50%;-webkit-text-stroke:.08px #333;">page</div>
<svg style="left:724.2px;top:31.4px" width="9" height="8" viewBox="0 0 9 8"><path d="M2.4 .8H8.4M4 2.6H8.4M4 4.4H8.4M2.4 6.4H8.4" stroke="#333" stroke-width=".9"/><path d="M.4 2.4L1.8 3.5L.4 4.6Z" fill="#3c95dc"/></svg>
<svg style="left:724.2px;top:43.2px" width="9" height="9" viewBox="0 0 9 9"><path d="M2.6 1.4H8.4M2.6 4.4H8.4M2.6 7.4H8.4" stroke="#333" stroke-width=".9"/><path d="M.8 0V8.6" stroke="#3c95dc" stroke-width=".8"/></svg>
<svg style="left:724px;top:55px" width="10" height="9" viewBox="0 0 10 9"><path d="M.4 5.6L2.4 .6L4.4 5.6M1.2 3.8H3.6" fill="none" stroke="#e8484e" stroke-width=".9"/><path d="M3.6 8.2L6 2.4L8.4 8.2M4.6 6.2H7.4" fill="none" stroke="#2f86d6" stroke-width="1"/></svg>
<div class="t" style="top:32px;height:7.8px;line-height:7.8px;font-size:6.0px;color:#333;left:734px;transform:translate(0.8px,0.25px) scaleX(0.899) rotate(0.03deg);transform-origin:0 50%;-webkit-text-stroke:.08px #333;">Paragraph</div>
<div class="t" style="top:44px;height:7.8px;line-height:7.8px;font-size:6.0px;color:#333;left:734px;transform:translate(0.8px,0.35px) scaleX(0.8651) rotate(0.03deg);transform-origin:0 50%;-webkit-text-stroke:.08px #333;">Numbering</div>
<div class="t" style="top:56px;height:7.8px;line-height:7.8px;font-size:6.0px;color:#333;left:734px;transform:translate(0.8px,0.35px) scaleX(0.8688) rotate(0.03deg);transform-origin:0 50%;-webkit-text-stroke:.08px #333;">Styles</div>
<svg style="left:764.6px;top:34.6px" width="8" height="9.5" viewBox="0 0 8 9.5"><path d="M3.4 4.4A2 2 0 0 1 3.4 .6H7.6M3.6 .6V9M5.8 .6V9" fill="none" stroke="#555" stroke-width=".9"/><path d="M3.4 .6A2 2 0 0 0 3.4 4.4Z" fill="#555"/></svg>
<svg style="left:764px;top:51px" width="9.5" height="9.5" viewBox="0 0 9.5 9.5"><rect x=".5" y=".5" width="8.4" height="8" fill="#fff" stroke="#666" stroke-width=".8"/><path d="M.5 3.2H8.9M.5 5.8H8.9M3.3 .5V8.5M6.1 .5V8.5" stroke="#666" stroke-width=".6"/></svg>
<div style="left:0px;top:77px;width:102px;height:359px;background:#f7f7f7;"></div>
<div style="left:1px;top:77px;width:100.5px;height:9.6px;background:#e9e9e9;"></div>
<div style="left:101.3px;top:77px;width:0.8px;height:359px;background:#d5d5d5;"></div>
<div style="left:0px;top:77px;width:0.8px;height:359px;background:#d5d5d5;"></div>
<div class="t" style="top:78px;height:7.8px;line-height:7.8px;font-size:6.0px;color:#1a1a1a;font-weight:bold;left:19px;transform:translate(0px,0.45px) scaleX(0.9964) rotate(0.03deg);transform-origin:0 50%;-webkit-text-stroke:.08px #1a1a1a;">Projects detail view</div>
<svg style="left:93.6px;top:78px" width="7" height="7" viewBox="0 0 7 7"><path d="M3.2 .8L1.2 3.4L3.2 6M5.8 .8L3.8 3.4L5.8 6" fill="none" stroke="#222" stroke-width=".75"/></svg>
<div style="left:1px;top:86.3px;width:100.3px;height:14.1px;background:#2374a9;"></div>
<div class="t" style="top:90px;height:7.8px;line-height:7.8px;font-size:6.0px;color:#fff;left:6px;transform:translate(0.3px,0.55px) scaleX(0.8677) rotate(0.03deg);transform-origin:0 50%;">Miscellaneous</div>
<div class="t" style="top:105px;height:7.8px;line-height:7.8px;font-size:6.0px;color:#111;left:6px;transform:translate(0.3px,0.35px) scaleX(0.8372) rotate(0.03deg);transform-origin:0 50%;-webkit-text-stroke:.08px #111;">Times</div>
<div class="t" style="top:120px;height:7.8px;line-height:7.8px;font-size:6.0px;color:#111;left:6px;transform:translate(0.3px,0.35px) scaleX(0.8795) rotate(0.03deg);transform-origin:0 50%;-webkit-text-stroke:.08px #111;">Price info</div>
<div class="t" style="top:135px;height:7.8px;line-height:7.8px;font-size:6.0px;color:#111;left:6px;transform:translate(0.3px,0.35px) scaleX(0.8926) rotate(0.03deg);transform-origin:0 50%;-webkit-text-stroke:.08px #111;">Documents and Notes</div>
<div class="t" style="top:150px;height:7.8px;line-height:7.8px;font-size:6.0px;color:#111;left:6px;transform:translate(0.3px,0.35px) scaleX(0.8993) rotate(0.03deg);transform-origin:0 50%;-webkit-text-stroke:.08px #111;">own fields</div>
<div class="t" style="top:165px;height:7.8px;line-height:7.8px;font-size:6.0px;color:#111;left:6px;transform:translate(0.3px,0.35px) scaleX(0.9084) rotate(0.03deg);transform-origin:0 50%;-webkit-text-stroke:.08px #111;">File attachments</div>
<div style="left:102.2px;top:77px;width:546.5999999999999px;height:341px;background:#fbfbfb;"></div>
<div style="left:114.7px;top:89.6px;width:524.3px;height:328.4px;background:#d9d9d9;"></div>
<div style="left:639px;top:89.6px;width:9.8px;height:328.4px;background:#f1f1f1;"></div>
<div style="left:639.6px;top:161px;width:8.2px;height:169px;background:#cdcdcd;"></div>
<svg style="left:640.4px;top:91.4px" width="7" height="6" viewBox="0 0 7 6"><path d="M1.2 4.2L3.5 1.8L5.8 4.2" fill="none" stroke="#444" stroke-width="1"/></svg>
<svg style="left:640.4px;top:409.8px" width="7" height="6" viewBox="0 0 7 6"><path d="M1.2 1.8L3.5 4.2L5.8 1.8" fill="none" stroke="#444" stroke-width="1"/></svg>
<div style="left:103.2px;top:79.2px;width:6.4px;height:6.4px;background:#fff;border:.6px solid #c4c4c4;"></div>
<svg style="left:104.6px;top:80.6px" width="4" height="4" viewBox="0 0 4 4"><path d="M1 .6V2.8H3.2" fill="none" stroke="#111" stroke-width=".9"/></svg>
<div style="left:178px;top:89.6px;width:1.4px;height:328.4px;background:#4a4a4a;"></div>
<div style="left:179.4px;top:89.6px;width:396.8px;height:328.4px;background:#fff;"></div>
<div style="left:576.2px;top:89.6px;width:3.2px;height:328.4px;background:#000;background:linear-gradient(90deg,#000 0,#222 55%,#9a9a9a 100%);"></div>
<div style="left:179.4px;top:78.4px;width:396.6px;height:9.6px;background:#fdfdfd;"></div>
<svg style="left:179.4px;top:78.4px" width="396.6" height="10" viewBox="0 0 396.6 10"><path d="M0.38 2.2V7.2" stroke="#666" stroke-width=".5"/><rect x="2.44" y="5.9" width=".6" height=".8" fill="#777"/><rect x="4.79" y="5.9" width=".6" height=".8" fill="#777"/><rect x="7.15" y="5.9" width=".6" height=".8" fill="#777"/><path d="M9.81 5V7" stroke="#888" stroke-width=".5"/><rect x="11.87" y="5.9" width=".6" height=".8" fill="#777"/><rect x="14.23" y="5.9" width=".6" height=".8" fill="#777"/><rect x="16.58" y="5.9" width=".6" height=".8" fill="#777"/><path d="M19.24 2.2V7.2" stroke="#666" stroke-width=".5"/><rect x="21.30" y="5.9" width=".6" height=".8" fill="#777"/><rect x="23.65" y="5.9" width=".6" height=".8" fill="#777"/><rect x="26.01" y="5.9" width=".6" height=".8" fill="#777"/><path d="M28.67 5V7" stroke="#888" stroke-width=".5"/><rect x="30.73" y="5.9" width=".6" height=".8" fill="#777"/><rect x="33.08" y="5.9" width=".6" height=".8" fill="#777"/><rect x="35.44" y="5.9" width=".6" height=".8" fill="#777"/><path d="M38.10 2.2V7.2" stroke="#666" stroke-width=".5"/><rect x="40.16" y="5.9" width=".6" height=".8" fill="#777"/><rect x="42.52" y="5.9" width=".6" height=".8" fill="#777"/><rect x="44.87" y="5.9" width=".6" height=".8" fill="#777"/><path d="M47.53 5V7" stroke="#888" stroke-width=".5"/><rect x="49.59" y="5.9" width=".6" height=".8" fill="#777"/><rect x="51.95" y="5.9" width=".6" height=".8" fill="#777"/><rect x="54.30" y="5.9" width=".6" height=".8" fill="#777"/><path d="M56.96 2.2V7.2" stroke="#666" stroke-width=".5"/><rect x="59.02" y="5.9" width=".6" height=".8" fill="#777"/><rect x="61.38" y="5.9" width=".6" height=".8" fill="#777"/><rect x="63.73" y="5.9" width=".6" height=".8" fill="#777"/><path d="M66.39 5V7" stroke="#888" stroke-width=".5"/><rect x="68.45" y="5.9" width=".6" height=".8" fill="#777"/><rect x="70.81" y="5.9" width=".6" height=".8" fill="#777"/><rect x="73.16" y="5.9" width=".6" height=".8" fill="#777"/><path d="M75.82 2.2V7.2" stroke="#666" stroke-width=".5"/><rect x="77.88" y="5.9" width=".6" height=".8" fill="#777"/><rect x="80.23" y="5.9" width=".6" height=".8" fill="#777"/><rect x="82.59" y="5.9" width=".6" height=".8" fill="#777"/><path d="M85.25 5V7" stroke="#888" stroke-width=".5"/><rect x="87.31" y="5.9" width=".6" height=".8" fill="#777"/><rect x="89.67" y="5.9" width=".6" height=".8" fill="#777"/><rect x="92.02" y="5.9" width=".6" height=".8" fill="#777"/><path d="M94.68 2.2V7.2" stroke="#666" stroke-width=".5"/><rect x="96.74" y="5.9" width=".6" height=".8" fill="#777"/><rect x="99.10" y="5.9" width=".6" height=".8" fill="#777"/><rect x="101.45" y="5.9" width=".6" height=".8" fill="#777"/><path d="M104.11 5V7" stroke="#888" stroke-width=".5"/><rect x="106.17" y="5.9" width=".6" height=".8" fill="#777"/><rect x="108.53" y="5.9" width=".6" height=".8" fill="#777"/><rect x="110.88" y="5.9" width=".6" height=".8" fill="#777"/><path d="M113.54 2.2V7.2" stroke="#666" stroke-width=".5"/><rect x="115.60" y="5.9" width=".6" height=".8" fill="#777"/><rect x="117.96" y="5.9" width=".6" height=".8" fill="#777"/><rect x="120.31" y="5.9" width=".6" height=".8" fill="#777"/><path d="M122.97 5V7" stroke="#888" stroke-width=".5"/><rect x="125.03" y="5.9" width=".6" height=".8" fill="#777"/><rect x="127.39" y="5.9" width=".6" height=".8" fill="#777"/><rect x="129.74" y="5.9" width=".6" height=".8" fill="#777"/><path d="M132.40 2.2V7.2" stroke="#666" stroke-width=".5"/><rect x="134.46" y="5.9" width=".6" height=".8" fill="#777"/><rect x="136.82" y="5.9" width=".6" height=".8" fill="#777"/><rect x="139.17" y="5.9" width=".6" height=".8" fill="#777"/><path d="M141.83 5V7" stroke="#888" stroke-width=".5"/><rect x="143.89" y="5.9" width=".6" height=".8" fill="#777"/><rect x="146.25" y="5.9" width=".6" height=".8" fill="#777"/><rect x="148.60" y="5.9" width=".6" height=".8" fill="#777"/><path d="M151.26 2.2V7.2" stroke="#666" stroke-width=".5"/><rect x="153.32" y="5.9" width=".6" height=".8" fill="#777"/><rect x="155.68" y="5.9" width=".6" height=".8" fill="#777"/><rect x="158.03" y="5.9" width=".6" height=".8" fill="#777"/><path d="M160.69 5V7" stroke="#888" stroke-width=".5"/><rect x="162.75" y="5.9" width=".6" height=".8" fill="#777"/><rect x="165.11" y="5.9" width=".6" height=".8" fill="#777"/><rect x="167.46" y="5.9" width=".6" height=".8" fill="#777"/><path d="M170.12 2.2V7.2" stroke="#666" stroke-width=".5"/><rect x="172.18" y="5.9" width=".6" height=".8" fill="#777"/><rect x="174.54" y="5.9" width=".6" height=".8" fill="#777"/><rect x="176.89" y="5.9" width=".6" height=".8" fill="#777"/><path d="M179.55 5V7" stroke="#888" stroke-width=".5"/><rect x="181.61" y="5.9" width=".6" height=".8" fill="#777"/><rect x="183.97" y="5.9" width=".6" height=".8" fill="#777"/><rect x="186.32" y="5.9" width=".6" height=".8" fill="#777"/><path d="M188.98 2.2V7.2" stroke="#666" stroke-width=".5"/><rect x="191.04" y="5.9" width=".6" height=".8" fill="#777"/><rect x="193.40" y="5.9" width=".6" height=".8" fill="#777"/><rect x="195.75" y="5.9" width=".6" height=".8" fill="#777"/><path d="M198.41 5V7" stroke="#888" stroke-width=".5"/><rect x="200.47" y="5.9" width=".6" height=".8" fill="#777"/><rect x="202.83" y="5.9" width=".6" height=".8" fill="#777"/><rect x="205.18" y="5.9" width=".6" height=".8" fill="#777"/><path d="M207.84 2.2V7.2" stroke="#666" stroke-width=".5"/><rect x="209.90" y="5.9" width=".6" height=".8" fill="#777"/><rect x="212.26" y="5.9" width=".6" height=".8" fill="#777"/><rect x="214.61" y="5.9" width=".6" height=".8" fill="#777"/><path d="M217.27 5V7" stroke="#888" stroke-width=".5"/><rect x="219.33" y="5.9" width=".6" height=".8" fill="#777"/><rect x="221.69" y="5.9" width=".6" height=".8" fill="#777"/><rect x="224.04" y="5.9" width=".6" height=".8" fill="#777"/><path d="M226.70 2.2V7.2" stroke="#666" stroke-width=".5"/><rect x="228.76" y="5.9" width=".6" height=".8" fill="#777"/><rect x="231.12" y="5.9" width=".6" height=".8" fill="#777"/><rect x="233.47" y="5.9" width=".6" height=".8" fill="#777"/><path d="M236.13 5V7" stroke="#888" stroke-width=".5"/><rect x="238.19" y="5.9" width=".6" height=".8" fill="#777"/><rect x="240.55" y="5.9" width=".6" height=".8" fill="#777"/><rect x="242.90" y="5.9" width=".6" height=".8" fill="#777"/><path d="M245.56 2.2V7.2" stroke="#666" stroke-width=".5"/><rect x="247.62" y="5.9" width=".6" height=".8" fill="#777"/><rect x="249.98" y="5.9" width=".6" height=".8" fill="#777"/><rect x="252.33" y="5.9" width=".6" height=".8" fill="#777"/><path d="M254.99 5V7" stroke="#888" stroke-width=".5"/><rect x="257.05" y="5.9" width=".6" height=".8" fill="#777"/><rect x="259.41" y="5.9" width=".6" height=".8" fill="#777"/><rect x="261.76" y="5.9" width=".6" height=".8" fill="#777"/><path d="M264.42 2.2V7.2" stroke="#666" stroke-width=".5"/><rect x="266.48" y="5.9" width=".6" height=".8" fill="#777"/><rect x="268.84" y="5.9" width=".6" height=".8" fill="#777"/><rect x="271.19" y="5.9" width=".6" height=".8" fill="#777"/><path d="M273.85 5V7" stroke="#888" stroke-width=".5"/><rect x="275.91" y="5.9" width=".6" height=".8" fill="#777"/><rect x="278.27" y="5.9" width=".6" height=".8" fill="#777"/><rect x="280.62" y="5.9" width=".6" height=".8" fill="#777"/><path d="M283.28 2.2V7.2" stroke="#666" stroke-width=".5"/><rect x="285.34" y="5.9" width=".6" height=".8" fill="#777"/><rect x="287.70" y="5.9" width=".6" height=".8" fill="#777"/><rect x="290.05" y="5.9" width=".6" height=".8" fill="#777"/><path d="M292.71 5V7" stroke="#888" stroke-width=".5"/><rect x="294.77" y="5.9" width=".6" height=".8" fill="#777"/><rect x="297.13" y="5.9" width=".6" height=".8" fill="#777"/><rect x="299.48" y="5.9" width=".6" height=".8" fill="#777"/><path d="M302.14 2.2V7.2" stroke="#666" stroke-width=".5"/><rect x="304.20" y="5.9" width=".6" height=".8" fill="#777"/><rect x="306.56" y="5.9" width=".6" height=".8" fill="#777"/><rect x="308.91" y="5.9" width=".6" height=".8" fill="#777"/><path d="M311.57 5V7" stroke="#888" stroke-width=".5"/><rect x="313.63" y="5.9" width=".6" height=".8" fill="#777"/><rect x="315.99" y="5.9" width=".6" height=".8" fill="#777"/><rect x="318.34" y="5.9" width=".6" height=".8" fill="#777"/><path d="M321.00 2.2V7.2" stroke="#666" stroke-width=".5"/><rect x="323.06" y="5.9" width=".6" height=".8" fill="#777"/><rect x="325.42" y="5.9" width=".6" height=".8" fill="#777"/><rect x="327.77" y="5.9" width=".6" height=".8" fill="#777"/><path d="M330.43 5V7" stroke="#888" stroke-width=".5"/><rect x="332.49" y="5.9" width=".6" height=".8" fill="#777"/><rect x="334.85" y="5.9" width=".6" height=".8" fill="#777"/><rect x="337.20" y="5.9" width=".6" height=".8" fill="#777"/><path d="M339.86 2.2V7.2" stroke="#666" stroke-width=".5"/><rect x="341.92" y="5.9" width=".6" height=".8" fill="#777"/><rect x="344.28" y="5.9" width=".6" height=".8" fill="#777"/><rect x="346.63" y="5.9" width=".6" height=".8" fill="#777"/><path d="M349.29 5V7" stroke="#888" stroke-width=".5"/><rect x="351.35" y="5.9" width=".6" height=".8" fill="#777"/><rect x="353.71" y="5.9" width=".6" height=".8" fill="#777"/><rect x="356.06" y="5.9" width=".6" height=".8" fill="#777"/><path d="M358.72 2.2V7.2" stroke="#666" stroke-width=".5"/><rect x="360.78" y="5.9" width=".6" height=".8" fill="#777"/><rect x="363.14" y="5.9" width=".6" height=".8" fill="#777"/><rect x="365.49" y="5.9" width=".6" height=".8" fill="#777"/><path d="M368.15 5V7" stroke="#888" stroke-width=".5"/><rect x="370.21" y="5.9" width=".6" height=".8" fill="#777"/><rect x="372.57" y="5.9" width=".6" height=".8" fill="#777"/><rect x="374.92" y="5.9" width=".6" height=".8" fill="#777"/><path d="M377.58 2.2V7.2" stroke="#666" stroke-width=".5"/><rect x="379.64" y="5.9" width=".6" height=".8" fill="#777"/><rect x="382.00" y="5.9" width=".6" height=".8" fill="#777"/><rect x="384.35" y="5.9" width=".6" height=".8" fill="#777"/><path d="M387.01 5V7" stroke="#888" stroke-width=".5"/><rect x="389.07" y="5.9" width=".6" height=".8" fill="#777"/><rect x="391.43" y="5.9" width=".6" height=".8" fill="#777"/><rect x="393.78" y="5.9" width=".6" height=".8" fill="#777"/></svg>
<div class="t" style="top:78px;height:6.11px;line-height:6.11px;font-size:4.7px;color:#555;left:180px;transform:translate(0.58px,0.295px) rotate(0.03deg);transform-origin:0 50%;">2</div>
<div class="t" style="top:78px;height:6.11px;line-height:6.11px;font-size:4.7px;color:#555;left:199px;transform:translate(0.44px,0.295px) rotate(0.03deg);transform-origin:0 50%;">1</div>
<div class="t" style="top:78px;height:6.11px;line-height:6.11px;font-size:4.7px;color:#555;left:237px;transform:translate(0.16px,0.295px) rotate(0.03deg);transform-origin:0 50%;">1</div>
<div class="t" style="top:78px;height:6.11px;line-height:6.11px;font-size:4.7px;color:#555;left:256px;transform:translate(0.02px,0.295px) rotate(0.03deg);transform-origin:0 50%;">2</div>
<div class="t" style="top:78px;height:6.11px;line-height:6.11px;font-size:4.7px;color:#555;left:274px;transform:translate(0.88px,0.295px) rotate(0.03deg);transform-origin:0 50%;">3</div>
<div class="t" style="top:78px;height:6.11px;line-height:6.11px;font-size:4.7px;color:#555;left:293px;transform:translate(0.74px,0.295px) rotate(0.03deg);transform-origin:0 50%;">4</div>
<div class="t" style="top:78px;height:6.11px;line-height:6.11px;font-size:4.7px;color:#555;left:312px;transform:translate(0.6px,0.295px) rotate(0.03deg);transform-origin:0 50%;">5</div>
<div class="t" style="top:78px;height:6.11px;line-height:6.11px;font-size:4.7px;color:#555;left:331px;transform:translate(0.46px,0.295px) rotate(0.03deg);transform-origin:0 50%;">6</div>
<div class="t" style="top:78px;height:6.11px;line-height:6.11px;font-size:4.7px;color:#555;left:350px;transform:translate(0.32px,0.295px) rotate(0.03deg);transform-origin:0 50%;">7</div>
<div class="t" style="top:78px;height:6.11px;line-height:6.11px;font-size:4.7px;color:#555;left:369px;transform:translate(0.18px,0.295px) rotate(0.03deg);transform-origin:0 50%;">8</div>
<div class="t" style="top:78px;height:6.11px;line-height:6.11px;font-size:4.7px;color:#555;left:388px;transform:translate(0.04px,0.295px) rotate(0.03deg);transform-origin:0 50%;">9</div>
<div class="t" style="top:78px;height:6.11px;line-height:6.11px;font-size:4.7px;color:#555;left:406px;transform:translate(0.9px,0.295px) rotate(0.03deg);transform-origin:0 50%;">10</div>
<div class="t" style="top:78px;height:6.11px;line-height:6.11px;font-size:4.7px;color:#555;left:425px;transform:translate(0.76px,0.295px) rotate(0.03deg);transform-origin:0 50%;">11</div>
<div class="t" style="top:78px;height:6.11px;line-height:6.11px;font-size:4.7px;color:#555;left:444px;transform:translate(0.62px,0.295px) rotate(0.03deg);transform-origin:0 50%;">12</div>
<div class="t" style="top:78px;height:6.11px;line-height:6.11px;font-size:4.7px;color:#555;left:463px;transform:translate(0.48px,0.295px) rotate(0.03deg);transform-origin:0 50%;">13</div>
<div class="t" style="top:78px;height:6.11px;line-height:6.11px;font-size:4.7px;color:#555;left:482px;transform:translate(0.34px,0.295px) rotate(0.03deg);transform-origin:0 50%;">14</div>
<div class="t" style="top:78px;height:6.11px;line-height:6.11px;font-size:4.7px;color:#555;left:501px;transform:translate(0.2px,0.295px) rotate(0.03deg);transform-origin:0 50%;">15</div>
<div class="t" style="top:78px;height:6.11px;line-height:6.11px;font-size:4.7px;color:#555;left:520px;transform:translate(0.06px,0.295px) rotate(0.03deg);transform-origin:0 50%;">16</div>
<div class="t" style="top:78px;height:6.11px;line-height:6.11px;font-size:4.7px;color:#555;left:538px;transform:translate(0.92px,0.295px) rotate(0.03deg);transform-origin:0 50%;">17</div>
<div class="t" style="top:78px;height:6.11px;line-height:6.11px;font-size:4.7px;color:#555;left:557px;transform:translate(0.78px,0.295px) rotate(0.03deg);transform-origin:0 50%;">18</div>
<svg style="left:214.5px;top:79.4px" width="7" height="10" viewBox="0 0 7 10"><path d="M2.6 1.2H3.6V4.4L3.1 5.4L2.6 4.4Z" fill="#222"/><path d="M0 8.4H3.2M3.2 7.4V9.4" stroke="#555" stroke-width=".5"/></svg>
<svg style="left:535px;top:79.4px" width="7" height="10" viewBox="0 0 7 10"><path d="M1.4 3.2L3.2 1.6V5L1.4 3.4Z" fill="#222"/><rect x="3.1" y="1.6" width=".7" height="5.4" fill="#222"/><path d="M3 8.2H5.6" stroke="#555" stroke-width=".5"/></svg>
<svg style="left:254.02px;top:85.2px" width="4" height="3.4" viewBox="0 0 4 3.4"><path d="M.6 .2V2.2H2.6" fill="none" stroke="#333" stroke-width=".7"/></svg>
<svg style="left:291.74px;top:85.2px" width="4" height="3.4" viewBox="0 0 4 3.4"><path d="M.6 .2V2.2H2.6" fill="none" stroke="#333" stroke-width=".7"/></svg>
<svg style="left:329.46px;top:85.2px" width="4" height="3.4" viewBox="0 0 4 3.4"><path d="M.6 .2V2.2H2.6" fill="none" stroke="#333" stroke-width=".7"/></svg>
<svg style="left:367.18px;top:85.2px" width="4" height="3.4" viewBox="0 0 4 3.4"><path d="M.6 .2V2.2H2.6" fill="none" stroke="#333" stroke-width=".7"/></svg>
<svg style="left:404.90000000000003px;top:85.2px" width="4" height="3.4" viewBox="0 0 4 3.4"><path d="M.6 .2V2.2H2.6" fill="none" stroke="#333" stroke-width=".7"/></svg>
<svg style="left:442.62px;top:85.2px" width="4" height="3.4" viewBox="0 0 4 3.4"><path d="M.6 .2V2.2H2.6" fill="none" stroke="#333" stroke-width=".7"/></svg>
<svg style="left:480.34px;top:85.2px" width="4" height="3.4" viewBox="0 0 4 3.4"><path d="M.6 .2V2.2H2.6" fill="none" stroke="#333" stroke-width=".7"/></svg>
<svg style="left:518.06px;top:85.2px" width="4" height="3.4" viewBox="0 0 4 3.4"><path d="M.6 .2V2.2H2.6" fill="none" stroke="#333" stroke-width=".7"/></svg>
<svg style="left:103px;top:89.6px" width="11" height="328.4" viewBox="0 0 11 328.4"><rect x="6.2" y="1.88" width=".7" height=".5" fill="#888"/><rect x="6.2" y="4.23" width=".7" height=".5" fill="#888"/><rect x="6.2" y="8.95" width=".7" height=".5" fill="#888"/><rect x="6.2" y="11.31" width=".7" height=".5" fill="#888"/><rect x="6.2" y="13.66" width=".7" height=".5" fill="#888"/><path d="M4.6 16.27H7" stroke="#888" stroke-width=".5"/><rect x="6.2" y="18.38" width=".7" height=".5" fill="#888"/><rect x="6.2" y="20.73" width=".7" height=".5" fill="#888"/><rect x="6.2" y="23.09" width=".7" height=".5" fill="#888"/><rect x="6.2" y="27.81" width=".7" height=".5" fill="#888"/><rect x="6.2" y="30.17" width=".7" height=".5" fill="#888"/><rect x="6.2" y="32.52" width=".7" height=".5" fill="#888"/><path d="M4.6 35.13H7" stroke="#888" stroke-width=".5"/><rect x="6.2" y="37.24" width=".7" height=".5" fill="#888"/><rect x="6.2" y="39.59" width=".7" height=".5" fill="#888"/><rect x="6.2" y="41.95" width=".7" height=".5" fill="#888"/><rect x="6.2" y="46.67" width=".7" height=".5" fill="#888"/><rect x="6.2" y="49.03" width=".7" height=".5" fill="#888"/><rect x="6.2" y="51.38" width=".7" height=".5" fill="#888"/><path d="M4.6 53.99H7" stroke="#888" stroke-width=".5"/><rect x="6.2" y="56.10" width=".7" height=".5" fill="#888"/><rect x="6.2" y="58.46" width=".7" height=".5" fill="#888"/><rect x="6.2" y="60.81" width=".7" height=".5" fill="#888"/><rect x="6.2" y="65.53" width=".7" height=".5" fill="#888"/><rect x="6.2" y="67.88" width=".7" height=".5" fill="#888"/><rect x="6.2" y="70.24" width=".7" height=".5" fill="#888"/><path d="M4.6 72.85H7" stroke="#888" stroke-width=".5"/><rect x="6.2" y="74.96" width=".7" height=".5" fill="#888"/><rect x="6.2" y="77.31" width=".7" height=".5" fill="#888"/><rect x="6.2" y="79.67" width=".7" height=".5" fill="#888"/><rect x="6.2" y="84.39" width=".7" height=".5" fill="#888"/><rect x="6.2" y="86.75" width=".7" height=".5" fill="#888"/><rect x="6.2" y="89.10" width=".7" height=".5" fill="#888"/><path d="M4.6 91.71H7" stroke="#888" stroke-width=".5"/><rect x="6.2" y="93.82" width=".7" height=".5" fill="#888"/><rect x="6.2" y="96.18" width=".7" height=".5" fill="#888"/><rect x="6.2" y="98.53" width=".7" height=".5" fill="#888"/><rect x="6.2" y="103.25" width=".7" height=".5" fill="#888"/><rect x="6.2" y="105.61" width=".7" height=".5" fill="#888"/><rect x="6.2" y="107.96" width=".7" height=".5" fill="#888"/><path d="M4.6 110.57H7" stroke="#888" stroke-width=".5"/><rect x="6.2" y="112.68" width=".7" height=".5" fill="#888"/><rect x="6.2" y="115.04" width=".7" height=".5" fill="#888"/><rect x="6.2" y="117.39" width=".7" height=".5" fill="#888"/><rect x="6.2" y="122.11" width=".7" height=".5" fill="#888"/><rect x="6.2" y="124.47" width=".7" height=".5" fill="#888"/><rect x="6.2" y="126.82" width=".7" height=".5" fill="#888"/><path d="M4.6 129.43H7" stroke="#888" stroke-width=".5"/><rect x="6.2" y="131.54" width=".7" height=".5" fill="#888"/><rect x="6.2" y="133.90" width=".7" height=".5" fill="#888"/><rect x="6.2" y="136.25" width=".7" height=".5" fill="#888"/><rect x="6.2" y="140.97" width=".7" height=".5" fill="#888"/><rect x="6.2" y="143.33" width=".7" height=".5" fill="#888"/><rect x="6.2" y="145.68" width=".7" height=".5" fill="#888"/><path d="M4.6 148.29H7" stroke="#888" stroke-width=".5"/><rect x="6.2" y="150.40" width=".7" height=".5" fill="#888"/><rect x="6.2" y="152.76" width=".7" height=".5" fill="#888"/><rect x="6.2" y="155.11" width=".7" height=".5" fill="#888"/><rect x="6.2" y="159.83" width=".7" height=".5" fill="#888"/><rect x="6.2" y="162.19" width=".7" height=".5" fill="#888"/><rect x="6.2" y="164.54" width=".7" height=".5" fill="#888"/><path d="M4.6 167.15H7" stroke="#888" stroke-width=".5"/><rect x="6.2" y="169.26" width=".7" height=".5" fill="#888"/><rect x="6.2" y="171.62" width=".7" height=".5" fill="#888"/><rect x="6.2" y="173.97" width=".7" height=".5" fill="#888"/><rect x="6.2" y="178.69" width=".7" height=".5" fill="#888"/><rect x="6.2" y="181.05" width=".7" height=".5" fill="#888"/><rect x="6.2" y="183.40" width=".7" height=".5" fill="#888"/><path d="M4.6 186.01H7" stroke="#888" stroke-width=".5"/><rect x="6.2" y="188.12" width=".7" height=".5" fill="#888"/><rect x="6.2" y="190.48" width=".7" height=".5" fill="#888"/><rect x="6.2" y="192.83" width=".7" height=".5" fill="#888"/><rect x="6.2" y="197.55" width=".7" height=".5" fill="#888"/><rect x="6.2" y="199.91" width=".7" height=".5" fill="#888"/><rect x="6.2" y="202.26" width=".7" height=".5" fill="#888"/><path d="M4.6 204.87H7" stroke="#888" stroke-width=".5"/><rect x="6.2" y="206.98" width=".7" height=".5" fill="#888"/><rect x="6.2" y="209.34" width=".7" height=".5" fill="#888"/><rect x="6.2" y="211.69" width=".7" height=".5" fill="#888"/><rect x="6.2" y="216.41" width=".7" height=".5" fill="#888"/><rect x="6.2" y="218.77" width=".7" height=".5" fill="#888"/><rect x="6.2" y="221.12" width=".7" height=".5" fill="#888"/><path d="M4.6 223.73H7" stroke="#888" stroke-width=".5"/><rect x="6.2" y="225.84" width=".7" height=".5" fill="#888"/><rect x="6.2" y="228.20" width=".7" height=".5" fill="#888"/><rect x="6.2" y="230.55" width=".7" height=".5" fill="#888"/><rect x="6.2" y="235.27" width=".7" height=".5" fill="#888"/><rect x="6.2" y="237.63" width=".7" height=".5" fill="#888"/><rect x="6.2" y="239.98" width=".7" height=".5" fill="#888"/><path d="M4.6 242.59H7" stroke="#888" stroke-width=".5"/><rect x="6.2" y="244.70" width=".7" height=".5" fill="#888"/><rect x="6.2" y="247.06" width=".7" height=".5" fill="#888"/><rect x="6.2" y="249.41" width=".7" height=".5" fill="#888"/><rect x="6.2" y="254.13" width=".7" height=".5" fill="#888"/><rect x="6.2" y="256.49" width=".7" height=".5" fill="#888"/><rect x="6.2" y="258.84" width=".7" height=".5" fill="#888"/><path d="M4.6 261.45H7" stroke="#888" stroke-width=".5"/><rect x="6.2" y="263.56" width=".7" height=".5" fill="#888"/><rect x="6.2" y="265.92" width=".7" height=".5" fill="#888"/><rect x="6.2" y="268.27" width=".7" height=".5" fill="#888"/><rect x="6.2" y="272.99" width=".7" height=".5" fill="#888"/><rect x="6.2" y="275.35" width=".7" height=".5" fill="#888"/><rect x="6.2" y="277.70" width=".7" height=".5" fill="#888"/><path d="M4.6 280.31H7" stroke="#888" stroke-width=".5"/><rect x="6.2" y="282.42" width=".7" height=".5" fill="#888"/><rect x="6.2" y="284.78" width=".7" height=".5" fill="#888"/><rect x="6.2" y="287.13" width=".7" height=".5" fill="#888"/><rect x="6.2" y="291.85" width=".7" height=".5" fill="#888"/><rect x="6.2" y="294.21" width=".7" height=".5" fill="#888"/><rect x="6.2" y="296.56" width=".7" height=".5" fill="#888"/><path d="M4.6 299.17H7" stroke="#888" stroke-width=".5"/><rect x="6.2" y="301.28" width=".7" height=".5" fill="#888"/><rect x="6.2" y="303.64" width=".7" height=".5" fill="#888"/><rect x="6.2" y="305.99" width=".7" height=".5" fill="#888"/><rect x="6.2" y="310.71" width=".7" height=".5" fill="#888"/><rect x="6.2" y="313.07" width=".7" height=".5" fill="#888"/><rect x="6.2" y="315.42" width=".7" height=".5" fill="#888"/><path d="M4.6 318.03H7" stroke="#888" stroke-width=".5"/><rect x="6.2" y="320.14" width=".7" height=".5" fill="#888"/><rect x="6.2" y="322.50" width=".7" height=".5" fill="#888"/><rect x="6.2" y="324.85" width=".7" height=".5" fill="#888"/></svg>
<div class="t" style="top:111px;height:5.72px;line-height:5.72px;font-size:4.4px;color:#555;left:6px;width:200px;text-align:center;transform:translate(0.4px,0.59px) rotate(-89.97deg);transform-origin:50% 50%;">1</div>
<svg style="left:103px;top:114.3px" width="11" height="2" viewBox="0 0 11 2"><path d="M6 .9H8" stroke="#777" stroke-width=".5"/></svg>
<div class="t" style="top:130px;height:5.72px;line-height:5.72px;font-size:4.4px;color:#555;left:6px;width:200px;text-align:center;transform:translate(0.4px,0.45px) rotate(-89.97deg);transform-origin:50% 50%;">2</div>
<svg style="left:103px;top:133.16px" width="11" height="2" viewBox="0 0 11 2"><path d="M6 .9H8" stroke="#777" stroke-width=".5"/></svg>
<div class="t" style="top:149px;height:5.72px;line-height:5.72px;font-size:4.4px;color:#555;left:6px;width:200px;text-align:center;transform:translate(0.4px,0.31px) rotate(-89.97deg);transform-origin:50% 50%;">3</div>
<svg style="left:103px;top:152.01999999999998px" width="11" height="2" viewBox="0 0 11 2"><path d="M6 .9H8" stroke="#777" stroke-width=".5"/></svg>
<div class="t" style="top:168px;height:5.72px;line-height:5.72px;font-size:4.4px;color:#555;left:6px;width:200px;text-align:center;transform:translate(0.4px,0.17px) rotate(-89.97deg);transform-origin:50% 50%;">4</div>
<svg style="left:103px;top:170.88px" width="11" height="2" viewBox="0 0 11 2"><path d="M6 .9H8" stroke="#777" stroke-width=".5"/></svg>
<div class="t" style="top:187px;height:5.72px;line-height:5.72px;font-size:4.4px;color:#555;left:6px;width:200px;text-align:center;transform:translate(0.4px,0.03px) rotate(-89.97deg);transform-origin:50% 50%;">5</div>
<svg style="left:103px;top:189.74px" width="11" height="2" viewBox="0 0 11 2"><path d="M6 .9H8" stroke="#777" stroke-width=".5"/></svg>
<div class="t" style="top:205px;height:5.72px;line-height:5.72px;font-size:4.4px;color:#555;left:6px;width:200px;text-align:center;transform:translate(0.4px,0.89px) rotate(-89.97deg);transform-origin:50% 50%;">6</div>
<svg style="left:103px;top:208.60000000000002px" width="11" height="2" viewBox="0 0 11 2"><path d="M6 .9H8" stroke="#777" stroke-width=".5"/></svg>
<div class="t" style="top:224px;height:5.72px;line-height:5.72px;font-size:4.4px;color:#555;left:6px;width:200px;text-align:center;transform:translate(0.4px,0.75px) rotate(-89.97deg);transform-origin:50% 50%;">7</div>
<svg style="left:103px;top:227.46000000000004px" width="11" height="2" viewBox="0 0 11 2"><path d="M6 .9H8" stroke="#777" stroke-width=".5"/></svg>
<div class="t" style="top:243px;height:5.72px;line-height:5.72px;font-size:4.4px;color:#555;left:6px;width:200px;text-align:center;transform:translate(0.4px,0.61px) rotate(-89.97deg);transform-origin:50% 50%;">8</div>
<svg style="left:103px;top:246.32000000000005px" width="11" height="2" viewBox="0 0 11 2"><path d="M6 .9H8" stroke="#777" stroke-width=".5"/></svg>
<div class="t" style="top:262px;height:5.72px;line-height:5.72px;font-size:4.4px;color:#555;left:6px;width:200px;text-align:center;transform:translate(0.4px,0.47px) rotate(-89.97deg);transform-origin:50% 50%;">9</div>
<svg style="left:103px;top:265.18000000000006px" width="11" height="2" viewBox="0 0 11 2"><path d="M6 .9H8" stroke="#777" stroke-width=".5"/></svg>
<div class="t" style="top:281px;height:5.72px;line-height:5.72px;font-size:4.4px;color:#555;left:6px;width:200px;text-align:center;transform:translate(0.4px,0.33px) rotate(-89.97deg);transform-origin:50% 50%;">10</div>
<svg style="left:103px;top:284.0400000000001px" width="11" height="2" viewBox="0 0 11 2"><path d="M6 .9H8" stroke="#777" stroke-width=".5"/></svg>
<div class="t" style="top:300px;height:5.72px;line-height:5.72px;font-size:4.4px;color:#555;left:6px;width:200px;text-align:center;transform:translate(0.4px,0.19px) rotate(-89.97deg);transform-origin:50% 50%;">11</div>
<svg style="left:103px;top:302.9000000000001px" width="11" height="2" viewBox="0 0 11 2"><path d="M6 .9H8" stroke="#777" stroke-width=".5"/></svg>
<div class="t" style="top:319px;height:5.72px;line-height:5.72px;font-size:4.4px;color:#555;left:6px;width:200px;text-align:center;transform:translate(0.4px,0.05px) rotate(-89.97deg);transform-origin:50% 50%;">12</div>
<svg style="left:103px;top:321.7600000000001px" width="11" height="2" viewBox="0 0 11 2"><path d="M6 .9H8" stroke="#777" stroke-width=".5"/></svg>
<div class="t" style="top:337px;height:5.72px;line-height:5.72px;font-size:4.4px;color:#555;left:6px;width:200px;text-align:center;transform:translate(0.4px,0.91px) rotate(-89.97deg);transform-origin:50% 50%;">13</div>
<svg style="left:103px;top:340.6200000000001px" width="11" height="2" viewBox="0 0 11 2"><path d="M6 .9H8" stroke="#777" stroke-width=".5"/></svg>
<div class="t" style="top:356px;height:5.72px;line-height:5.72px;font-size:4.4px;color:#555;left:6px;width:200px;text-align:center;transform:translate(0.4px,0.77px) rotate(-89.97deg);transform-origin:50% 50%;">14</div>
<svg style="left:103px;top:359.48000000000013px" width="11" height="2" viewBox="0 0 11 2"><path d="M6 .9H8" stroke="#777" stroke-width=".5"/></svg>
<div class="t" style="top:375px;height:5.72px;line-height:5.72px;font-size:4.4px;color:#555;left:6px;width:200px;text-align:center;transform:translate(0.4px,0.63px) rotate(-89.97deg);transform-origin:50% 50%;">15</div>
<svg style="left:103px;top:378.34000000000015px" width="11" height="2" viewBox="0 0 11 2"><path d="M6 .9H8" stroke="#777" stroke-width=".5"/></svg>
<div class="t" style="top:394px;height:5.72px;line-height:5.72px;font-size:4.4px;color:#555;left:6px;width:200px;text-align:center;transform:translate(0.4px,0.49px) rotate(-89.97deg);transform-origin:50% 50%;">16</div>
<svg style="left:103px;top:397.20000000000016px" width="11" height="2" viewBox="0 0 11 2"><path d="M6 .9H8" stroke="#777" stroke-width=".5"/></svg>
<div class="t" style="top:413px;height:5.72px;line-height:5.72px;font-size:4.4px;color:#555;left:6px;width:200px;text-align:center;transform:translate(0.4px,0.35px) rotate(-89.97deg);transform-origin:50% 50%;">17</div>
<svg style="left:103px;top:416.0600000000002px" width="11" height="2" viewBox="0 0 11 2"><path d="M6 .9H8" stroke="#777" stroke-width=".5"/></svg>
<svg style="left:111.6px;top:89.4px" width="3.4" height="6" viewBox="0 0 3.4 6"><rect x=".4" y=".4" width="1.8" height="4.6" fill="#333"/><path d="M.2 3H2.6" stroke="#888" stroke-width=".4"/></svg>
<div class="t" style="top:94px;height:6.24px;line-height:6.24px;font-size:4.8px;color:#000;left:217px;transform:translate(0px,0.63px) scaleX(0.9704) rotate(0.03deg);transform-origin:0 50%;-webkit-text-stroke:0.12px #000;">Sample Company- Sample street 1245 · 12345 Sample town</div>
<div class="t" style="top:100px;height:7.8px;line-height:7.8px;font-size:6.0px;color:#000;left:217px;transform:translate(0px,0.75px) scaleX(0.9927) rotate(0.03deg);transform-origin:0 50%;-webkit-text-stroke:0.12px #000;">John Doe</div>
<div class="t" style="top:107px;height:7.8px;line-height:7.8px;font-size:6.0px;color:#000;left:217px;transform:translate(0px,0.75px) scaleX(1.0053) rotate(0.03deg);transform-origin:0 50%;-webkit-text-stroke:0.12px #000;">123 Anywhere Street</div>
<div class="t" style="top:114px;height:7.8px;line-height:7.8px;font-size:6.0px;color:#000;left:217px;transform:translate(0px,0.75px) scaleX(0.9989) rotate(0.03deg);transform-origin:0 50%;-webkit-text-stroke:0.12px #000;">12345 Anytown</div>
<div class="t" style="top:135px;height:7.8px;line-height:7.8px;font-size:6.0px;color:#000;left:217px;transform:translate(0px,0.45px) scaleX(1.003) rotate(0.03deg);transform-origin:0 50%;-webkit-text-stroke:0.12px #000;">Delivery address:</div>
<div class="t" style="top:141px;height:7.8px;line-height:7.8px;font-size:6.0px;color:#000;left:217px;transform:translate(0px,0.75px) scaleX(0.9927) rotate(0.03deg);transform-origin:0 50%;-webkit-text-stroke:0.12px #000;">John Doe</div>
<div class="t" style="top:148px;height:7.8px;line-height:7.8px;font-size:6.0px;color:#000;left:217px;transform:translate(0px,0.75px) scaleX(1.0053) rotate(0.03deg);transform-origin:0 50%;-webkit-text-stroke:0.12px #000;">125 Anywhere Street</div>
<div class="t" style="top:155px;height:7.8px;line-height:7.8px;font-size:6.0px;color:#000;left:217px;transform:translate(0px,0.75px) scaleX(0.9989) rotate(0.03deg);transform-origin:0 50%;-webkit-text-stroke:0.12px #000;">12345 Anytown</div>
<div class="t" style="top:176px;height:8.71px;line-height:8.71px;font-size:6.7px;color:#000;font-weight:bold;left:217px;transform:translate(0px,0.095px) scaleX(0.9847) rotate(0.03deg);transform-origin:0 50%;-webkit-text-stroke:0.05px #000;">Quotation Q201912/0035</div>
<div class="t" style="top:191px;height:8.71px;line-height:8.71px;font-size:6.7px;color:#000;font-weight:bold;left:217px;transform:translate(0px,0.795px) scaleX(0.9852) rotate(0.03deg);transform-origin:0 50%;-webkit-text-stroke:0.05px #000;">Subject:</div>
<div class="t" style="top:206px;height:7.8px;line-height:7.8px;font-size:6.0px;color:#000;left:217px;transform:translate(0px,0.25px) scaleX(1.0088) rotate(0.03deg);transform-origin:0 50%;-webkit-text-stroke:0.12px #000;">Dear Mr. Doe</div>
<div class="t" style="top:220px;height:7.8px;line-height:7.8px;font-size:6.0px;color:#000;left:217px;transform:translate(0px,0.25px) scaleX(1.0077) rotate(0.03deg);transform-origin:0 50%;-webkit-text-stroke:0.12px #000;">We offer to you the following items and services:</div>
<div style="left:408.2px;top:103.2px;width:130.8px;height:86.4px;background:#fff;border:.7px solid #d6d6d6;"></div>
<div style="left:408.2px;top:103.2px;width:130px;height:64px;background:transparent;border:1px solid #555;"></div>
<div class="t" style="top:103px;height:7.8px;line-height:7.8px;font-size:6.0px;color:#000;left:408px;transform:translate(0.8px,0.85px) scaleX(1.0131) rotate(0.03deg);transform-origin:0 50%;-webkit-text-stroke:0.12px #000;">Customer No.</div>
<div class="t" style="top:103px;height:7.8px;line-height:7.8px;font-size:6.0px;color:#000;left:457px;transform:translate(0.6px,0.85px) scaleX(0.9588) rotate(0.03deg);transform-origin:0 50%;-webkit-text-stroke:0.12px #000;">10000</div>
<div class="t" style="top:110px;height:7.8px;line-height:7.8px;font-size:6.0px;color:#000;left:408px;transform:translate(0.8px,0.75px) scaleX(1.0435) rotate(0.03deg);transform-origin:0 50%;-webkit-text-stroke:0.12px #000;">Project</div>
<div class="t" style="top:110px;height:7.8px;line-height:7.8px;font-size:6.0px;color:#000;left:457px;transform:translate(0.6px,0.75px) scaleX(1.0302) rotate(0.03deg);transform-origin:0 50%;-webkit-text-stroke:0.12px #000;">Demo</div>
<div class="t" style="top:124px;height:7.8px;line-height:7.8px;font-size:6.0px;color:#000;left:408px;transform:translate(0.8px,0.25px) scaleX(1.041) rotate(0.03deg);transform-origin:0 50%;-webkit-text-stroke:0.12px #000;">Your contact</div>
<div class="t" style="top:124px;height:7.8px;line-height:7.8px;font-size:6.0px;color:#000;left:457px;transform:translate(0.6px,0.25px) scaleX(1.0285) rotate(0.03deg);transform-origin:0 50%;-webkit-text-stroke:0.12px #000;">Anton Admin</div>
<div class="t" style="top:131px;height:7.8px;line-height:7.8px;font-size:6.0px;color:#000;left:408px;transform:translate(0.8px,0.25px) scaleX(1.0323) rotate(0.03deg);transform-origin:0 50%;-webkit-text-stroke:0.12px #000;">EMail</div>
<div class="t" style="top:131px;height:7.8px;line-height:7.8px;font-size:6.0px;color:#000;left:457px;transform:translate(0.6px,0.25px) scaleX(1.0031) rotate(0.03deg);transform-origin:0 50%;-webkit-text-stroke:0.12px #000;">noreply@ingenious.de</div>
<div class="t" style="top:137px;height:7.8px;line-height:7.8px;font-size:6.0px;color:#000;left:408px;transform:translate(0.8px,0.95px) scaleX(1.0081) rotate(0.03deg);transform-origin:0 50%;-webkit-text-stroke:0.12px #000;">Phone</div>
<div class="t" style="top:137px;height:7.8px;line-height:7.8px;font-size:6.0px;color:#000;left:457px;transform:translate(0.6px,0.95px) scaleX(1.0272) rotate(0.03deg);transform-origin:0 50%;-webkit-text-stroke:0.12px #000;">0123/456789</div>
<div class="t" style="top:144px;height:7.8px;line-height:7.8px;font-size:6.0px;color:#000;left:408px;transform:translate(0.8px,0.85px) scaleX(0.9485) rotate(0.03deg);transform-origin:0 50%;-webkit-text-stroke:0.12px #000;">Fax</div>
<div class="t" style="top:144px;height:7.8px;line-height:7.8px;font-size:6.0px;color:#000;left:457px;transform:translate(0.6px,0.85px) scaleX(1.0272) rotate(0.03deg);transform-origin:0 50%;-webkit-text-stroke:0.12px #000;">0123/456780</div>
<div class="t" style="top:159px;height:7.8px;line-height:7.8px;font-size:6.0px;color:#000;left:408px;transform:translate(0.8px,0.15px) scaleX(0.9852) rotate(0.03deg);transform-origin:0 50%;-webkit-text-stroke:0.12px #000;">Date</div>
<div class="t" style="top:159px;height:7.8px;line-height:7.8px;font-size:6.0px;color:#000;left:457px;transform:translate(0.6px,0.15px) scaleX(0.999) rotate(0.03deg);transform-origin:0 50%;-webkit-text-stroke:0.12px #000;">12/20/2019</div>
<div style="left:217.2px;top:233.2px;width:322px;height:15.4px;background:transparent;border:.8px solid #333;"></div>
<div class="t" style="top:235px;height:7.28px;line-height:7.28px;font-size:5.6px;color:#000;font-weight:bold;left:220px;transform:translate(0px,0.11px) scaleX(1.0441) rotate(0.03deg);transform-origin:0 50%;-webkit-text-stroke:0.05px #000;">PosNo</div>
<div class="t" style="top:235px;height:7.28px;line-height:7.28px;font-size:5.6px;color:#000;font-weight:bold;left:242px;transform:translate(0.6px,0.11px) scaleX(1.028) rotate(0.03deg);transform-origin:0 50%;-webkit-text-stroke:0.05px #000;">ItemNo</div>
<div class="t" style="top:235px;height:7.28px;line-height:7.28px;font-size:5.6px;color:#000;font-weight:bold;left:267px;transform:translate(0px,0.11px) scaleX(1.0558) rotate(0.03deg);transform-origin:0 50%;-webkit-text-stroke:0.05px #000;">Description</div>
<div class="t" style="top:241px;height:7.28px;line-height:7.28px;font-size:5.6px;color:#000;left:268px;transform:translate(0.2px,0.91px) scaleX(1.048) rotate(0.03deg);transform-origin:0 50%;-webkit-text-stroke:0.12px #000;">Width</div>
<div class="t" style="top:241px;height:7.28px;line-height:7.28px;font-size:5.6px;color:#000;left:310px;transform:translate(0px,0.91px) scaleX(1.0821) rotate(0.03deg);transform-origin:0 50%;-webkit-text-stroke:0.12px #000;">Height</div>
<div class="t" style="top:241px;height:7.28px;line-height:7.28px;font-size:5.6px;color:#000;left:357px;transform:translate(0.4px,0.91px) scaleX(1.0632) rotate(0.03deg);transform-origin:0 50%;-webkit-text-stroke:0.12px #000;">Surface</div>
<div class="t" style="top:235px;height:7.28px;line-height:7.28px;font-size:5.6px;color:#000;font-weight:bold;right:370px;transform:translate(-0.6px,0.11px) scaleX(1.0579) rotate(0.03deg);transform-origin:100% 50%;-webkit-text-stroke:0.05px #000;">Quantity</div>
<div class="t" style="top:235px;height:7.28px;line-height:7.28px;font-size:5.6px;color:#000;font-weight:bold;right:336px;transform:translate(-0.4px,0.11px) scaleX(1.039) rotate(0.03deg);transform-origin:100% 50%;-webkit-text-stroke:0.05px #000;">SP $</div>
<div class="t" style="top:235px;height:7.28px;line-height:7.28px;font-size:5.6px;color:#000;font-weight:bold;right:310px;transform:translate(0px,0.11px) scaleX(1.072) rotate(0.03deg);transform-origin:100% 50%;-webkit-text-stroke:0.05px #000;">Rebate</div>
<div class="t" style="top:235px;height:7.28px;line-height:7.28px;font-size:5.6px;color:#000;font-weight:bold;left:493px;transform:translate(0.2px,0.11px) scaleX(0.939) rotate(0.03deg);transform-origin:0 50%;-webkit-text-stroke:0.05px #000;">tax</div>
<div class="t" style="top:235px;height:7.28px;line-height:7.28px;font-size:5.6px;color:#000;font-weight:bold;right:262px;transform:translate(-0.8px,0.11px) scaleX(1.0667) rotate(0.03deg);transform-origin:100% 50%;-webkit-text-stroke:0.05px #000;">GP $</div>
<div class="t" style="top:251px;height:7.8px;line-height:7.8px;font-size:6.0px;color:#000;left:220px;transform:translate(0px,0.05px) scaleX(1.0484) rotate(0.03deg);transform-origin:0 50%;-webkit-text-stroke:0.12px #000;">001</div>
<div class="t" style="top:251px;height:5.72px;line-height:5.72px;font-size:4.4px;color:#000;left:243px;transform:translate(0px,0.69px) scaleX(0.8184) rotate(0.03deg);transform-origin:0 50%;-webkit-text-stroke:0.12px #000;">RS</div>
<div class="t" style="top:251px;height:7.8px;line-height:7.8px;font-size:6.0px;color:#000;font-weight:bold;left:267px;transform:translate(0px,0.05px) scaleX(1.0) rotate(0.03deg);transform-origin:0 50%;-webkit-text-stroke:0.05px #000;">Rolling Shutter</div>
<div class="t" style="top:258px;height:7.8px;line-height:7.8px;font-size:6.0px;color:#000;left:267px;transform:translate(0px,0.15px) scaleX(0.9983) rotate(0.03deg);transform-origin:0 50%;-webkit-text-stroke:0.12px #000;">45° Casing 137 in white</div>
<div class="t" style="top:265px;height:7.8px;line-height:7.8px;font-size:6.0px;color:#000;left:267px;transform:translate(0px,0.15px) scaleX(0.9993) rotate(0.03deg);transform-origin:0 50%;-webkit-text-stroke:0.12px #000;">ALU Curtain 32 in white</div>
<div class="t" style="top:272px;height:7.8px;line-height:7.8px;font-size:6.0px;color:#000;left:267px;transform:translate(0px,0.15px) scaleX(1.0144) rotate(0.03deg);transform-origin:0 50%;-webkit-text-stroke:0.12px #000;">Bottom Slat ALU in white</div>
<div class="t" style="top:279px;height:7.8px;line-height:7.8px;font-size:6.0px;color:#000;left:267px;transform:translate(0px,0.15px) scaleX(1.0067) rotate(0.03deg);transform-origin:0 50%;-webkit-text-stroke:0.12px #000;">ALU Mini - Guide channel in white</div>
<div class="t" style="top:286px;height:7.8px;line-height:7.8px;font-size:6.0px;color:#000;left:267px;transform:translate(0px,0.15px) scaleX(1.0231) rotate(0.03deg);transform-origin:0 50%;-webkit-text-stroke:0.12px #000;">Tape coiler - Operation left</div>
<div class="t" style="top:292px;height:7.8px;line-height:7.8px;font-size:6.0px;color:#000;left:268px;transform:translate(0.8px,0.95px) scaleX(0.9884) rotate(0.03deg);transform-origin:0 50%;-webkit-text-stroke:0.12px #000;">100"</div>
<div class="t" style="top:292px;height:7.8px;line-height:7.8px;font-size:6.0px;color:#000;left:301px;transform:translate(0.6px,0.95px) scaleX(0.9333) rotate(0.03deg);transform-origin:0 50%;-webkit-text-stroke:0.12px #000;">x</div>
<div class="t" style="top:292px;height:7.8px;line-height:7.8px;font-size:6.0px;color:#000;left:310px;transform:translate(0.6px,0.95px) scaleX(0.9884) rotate(0.03deg);transform-origin:0 50%;-webkit-text-stroke:0.12px #000;">100"</div>
<div class="t" style="top:292px;height:7.8px;line-height:7.8px;font-size:6.0px;color:#000;left:345px;transform:translate(0px,0.95px) scaleX(0.9102) rotate(0.03deg);transform-origin:0 50%;-webkit-text-stroke:0.12px #000;">=</div>
<div class="t" style="top:292px;height:7.8px;line-height:7.8px;font-size:6.0px;color:#000;left:357px;transform:translate(0px,0.95px) scaleX(1.0243) rotate(0.03deg);transform-origin:0 50%;-webkit-text-stroke:0.12px #000;">69.44 sqft</div>
<div class="t" style="top:251px;height:7.8px;line-height:7.8px;font-size:6.0px;color:#000;right:369px;transform:translate(-0.8px,0.05px) scaleX(1.0138) rotate(0.03deg);transform-origin:100% 50%;-webkit-text-stroke:0.12px #000;">1 pc</div>
<div class="t" style="top:251px;height:7.8px;line-height:7.8px;font-size:6.0px;color:#000;right:336px;transform:translate(0px,0.05px) scaleX(1.0349) rotate(0.03deg);transform-origin:100% 50%;-webkit-text-stroke:0.12px #000;">149.06</div>
<div class="t" style="top:251px;height:7.8px;line-height:7.8px;font-size:6.0px;color:#000;right:310px;transform:translate(0px,0.05px) scaleX(0.9632) rotate(0.03deg);transform-origin:100% 50%;-webkit-text-stroke:0.12px #000;">-10%</div>
<div class="t" style="top:251px;height:7.8px;line-height:7.8px;font-size:6.0px;color:#000;left:497px;transform:translate(0px,0.05px) scaleX(0.957) rotate(0.03deg);transform-origin:0 50%;-webkit-text-stroke:0.12px #000;">0</div>
<div class="t" style="top:251px;height:7.8px;line-height:7.8px;font-size:6.0px;color:#000;right:261px;transform:translate(-0.8px,0.05px) scaleX(1.0077) rotate(0.03deg);transform-origin:100% 50%;-webkit-text-stroke:0.12px #000;">134.15</div>
<svg style="left:268px;top:300px" width="90" height="74" viewBox="0 0 90 74"><text x="3.2" y="4.2" font-size="2.5" fill="#666" font-family="Liberation Sans, sans-serif">View from inside</text><rect x="2.8" y="5.6" width="57.9" height="57.8" fill="#fff" stroke="#777" stroke-width=".6"/><rect x="2.8" y="5.6" width="57.9" height="7.9" fill="#f1f1f1" stroke="#888" stroke-width=".5"/><path d="M2.6 5.6H60.9" stroke="#222" stroke-width=".8"/><rect x="6.7" y="13.5" width="50.6" height="47.8" fill="#f3f3f3" stroke="#555" stroke-width=".6"/><path d="M4.8 13.5V63.2M59 13.5V63.2" stroke="#999" stroke-width=".4"/><path d="M6.7 61.3H57.3M2.8 63.4H60.7" stroke="#222" stroke-width=".7"/><circle cx="6.9" cy="9.8" r="2.2" fill="#fff" stroke="#222" stroke-width=".7"/><circle cx="6.9" cy="9.8" r=".9" fill="#666"/><path d="M60.7 5.6H86M60.7 13.5H73.4M60.7 63.4H86M66.6 13.5V63.4M79.6 5.6V63.4M2.8 63.8V70M60.7 63.8V70M2.8 66.8H24M40 66.8H60.7" stroke="#c4c4c4" stroke-width=".5" fill="none"/><text x="65.4" y="10.2" font-size="2.5" fill="#808080" font-family="Liberation Sans, sans-serif">10"</text><text x="62.4" y="39.2" font-size="2.6" fill="#707070" font-family="Liberation Sans, sans-serif">90.00"</text><text x="73.6" y="35" font-size="2.6" fill="#707070" font-family="Liberation Sans, sans-serif">100.00"</text><text x="26.4" y="67.6" font-size="2.6" fill="#707070" font-family="Liberation Sans, sans-serif">100.00"</text></svg>
<div style="left:217.2px;top:384.2px;width:322px;height:40px;background:transparent;border:.8px solid #333;"></div>
<div style="left:403.2px;top:384.2px;width:0.8px;height:34px;background:#333;"></div>
<div class="t" style="top:388px;height:7.8px;line-height:7.8px;font-size:6.0px;color:#000;font-weight:bold;left:219px;transform:translate(0.4px,0.65px) scaleX(0.9838) rotate(0.03deg);transform-origin:0 50%;-webkit-text-stroke:0.05px #000;">Payment Terms:</div>
<div class="t" style="top:399px;height:7.8px;line-height:7.8px;font-size:6.0px;color:#000;left:217px;transform:translate(0.4px,0.15px) scaleX(1.0079) rotate(0.03deg);transform-origin:0 50%;-webkit-text-stroke:0.12px #000;">Within 7 days with 2.00% discount or within 14 days in total.</div>
<div class="t" style="top:387px;height:7.8px;line-height:7.8px;font-size:6.0px;color:#000;font-weight:bold;left:405px;transform:translate(0.8px,0.85px) scaleX(1.0178) rotate(0.03deg);transform-origin:0 50%;-webkit-text-stroke:0.05px #000;">Total net</div>
<div class="t" style="top:387px;height:7.8px;line-height:7.8px;font-size:6.0px;color:#000;font-weight:bold;right:263px;transform:translate(0px,0.85px) scaleX(1.0077) rotate(0.03deg);transform-origin:100% 50%;-webkit-text-stroke:0.05px #000;">134.15</div>
<div class="t" style="top:398px;height:7.8px;line-height:7.8px;font-size:6.0px;color:#000;left:405px;transform:translate(0.8px,0.15px) scaleX(1.0716) rotate(0.03deg);transform-origin:0 50%;-webkit-text-stroke:0.12px #000;">VAT. 0 %</div>
<div class="t" style="top:399px;height:5.98px;line-height:5.98px;font-size:4.6px;color:#000;font-weight:bold;left:451px;transform:translate(0px,0.06px) scaleX(1.1438) rotate(0.03deg);transform-origin:0 50%;-webkit-text-stroke:0.05px #000;">on 0.00 $</div>
<div class="t" style="top:398px;height:7.8px;line-height:7.8px;font-size:6.0px;color:#000;right:263px;transform:translate(-0.6px,0.15px) scaleX(1.0267) rotate(0.03deg);transform-origin:100% 50%;-webkit-text-stroke:0.12px #000;">0.00</div>
<div class="t" style="top:408px;height:7.8px;line-height:7.8px;font-size:6.0px;color:#000;left:405px;transform:translate(0.8px,0.35px) scaleX(1.0716) rotate(0.03deg);transform-origin:0 50%;-webkit-text-stroke:0.12px #000;">VAT. 0 %</div>
<div class="t" style="top:409px;height:5.98px;line-height:5.98px;font-size:4.6px;color:#000;font-weight:bold;left:451px;transform:translate(0px,0.26px) scaleX(1.1438) rotate(0.03deg);transform-origin:0 50%;-webkit-text-stroke:0.05px #000;">on 0.00 $</div>
<div class="t" style="top:408px;height:7.8px;line-height:7.8px;font-size:6.0px;color:#000;right:263px;transform:translate(-0.6px,0.35px) scaleX(1.0267) rotate(0.03deg);transform-origin:100% 50%;-webkit-text-stroke:0.12px #000;">0.00</div>
<div style="left:648.8px;top:77px;width:140.4000000000001px;height:340.8px;background:#e2e2e2;"></div>
<div style="left:648.8px;top:77px;width:0.8px;height:340.8px;background:#c9c9c9;"></div>
<div style="left:789.2px;top:77px;width:10.799999999999955px;height:340.8px;background:#f7f7f7;"></div>
<div style="left:649.5999999999999px;top:77.0px;width:139.60000000000008px;height:10.6px;background:#dddddd;"></div>
<div class="t" style="top:79px;height:7.8px;line-height:7.8px;font-size:6.0px;color:#1c1c1c;font-weight:bold;left:659px;transform:translate(0px,0.35px) scaleX(0.9509) rotate(0.03deg);transform-origin:0 50%;-webkit-text-stroke:.08px #1c1c1c;">Miscellaneous</div>
<svg style="left:781.7px;top:79.7px" width="6" height="5" viewBox="0 0 6 5"><path d="M1.2 3.4L3 1.6L4.8 3.4" fill="none" stroke="#777" stroke-width=".6"/></svg>
<div style="left:657.0px;top:87.2px;width:62.200000000000045px;height:9.5px;background:#efefef;border-top:.7px solid #d2d2d2;border-left:.7px solid #d2d2d2;"></div>
<div style="left:719.2px;top:87.2px;width:70.0px;height:9.5px;background:#fff;border-top:.7px solid #d2d2d2;border-left:.7px solid #d2d2d2;"></div>
<div class="t" style="top:89px;height:7.8px;line-height:7.8px;font-size:6.0px;color:#1c1cf0;left:666px;transform:translate(0px,0.0px) scaleX(0.8429) rotate(0.03deg);transform-origin:0 50%;">Name</div>
<div class="t" style="top:89px;height:7.8px;line-height:7.8px;font-size:6.0px;color:#9b9ba8;left:721px;transform:translate(0.5px,0.0px) scaleX(0.9412) rotate(0.03deg);transform-origin:0 50%;">Quotation</div>
<div style="left:657.0px;top:96.7px;width:62.200000000000045px;height:9.5px;background:#efefef;border-top:.7px solid #d2d2d2;border-left:.7px solid #d2d2d2;"></div>
<div style="left:719.2px;top:96.7px;width:70.0px;height:9.5px;background:#fff;border-top:.7px solid #d2d2d2;border-left:.7px solid #d2d2d2;"></div>
<div class="t" style="top:98px;height:7.8px;line-height:7.8px;font-size:6.0px;color:#1c1cf0;left:666px;transform:translate(0px,0.5px) scaleX(0.8668) rotate(0.03deg);transform-origin:0 50%;">Number</div>
<div class="t" style="top:98px;height:7.8px;line-height:7.8px;font-size:6.0px;color:#9b9ba8;left:721px;transform:translate(0.5px,0.5px) scaleX(0.9067) rotate(0.03deg);transform-origin:0 50%;">Q201912/0035</div>
<div style="left:657.0px;top:106.2px;width:62.200000000000045px;height:9.5px;background:#efefef;border-top:.7px solid #d2d2d2;border-left:.7px solid #d2d2d2;"></div>
<div style="left:719.2px;top:106.2px;width:70.0px;height:9.5px;background:#fff;border-top:.7px solid #d2d2d2;border-left:.7px solid #d2d2d2;"></div>
<div class="t" style="top:108px;height:7.8px;line-height:7.8px;font-size:6.0px;color:#222;left:666px;transform:translate(0px,0.0px) scaleX(0.9097) rotate(0.03deg);transform-origin:0 50%;-webkit-text-stroke:.08px #222;">Project</div>
<div class="t" style="top:108px;height:7.8px;line-height:7.8px;font-size:6.0px;color:#222;left:721px;transform:translate(0.5px,0.0px) scaleX(0.8429) rotate(0.03deg);transform-origin:0 50%;-webkit-text-stroke:.08px #222;">Demo</div>
<svg style="left:782.4px;top:109.35000000000001px" width="6" height="4" viewBox="0 0 6 4"><path d="M1.3 .7H4.7L3 2.9Z" fill="#222"/></svg>
<div style="left:657.0px;top:115.7px;width:62.200000000000045px;height:9.5px;background:#efefef;border-top:.7px solid #d2d2d2;border-left:.7px solid #d2d2d2;"></div>
<div style="left:719.2px;top:115.7px;width:70.0px;height:9.5px;background:#fff;border-top:.7px solid #d2d2d2;border-left:.7px solid #d2d2d2;"></div>
<div class="t" style="top:117px;height:7.8px;line-height:7.8px;font-size:6.0px;color:#222;left:666px;transform:translate(0px,0.5px) scaleX(0.8955) rotate(0.03deg);transform-origin:0 50%;-webkit-text-stroke:.08px #222;">Printed on</div>
<div class="t" style="top:117px;height:7.8px;line-height:7.8px;font-size:6.0px;color:#222;left:721px;transform:translate(0.5px,0.5px) scaleX(0.9324) rotate(0.03deg);transform-origin:0 50%;-webkit-text-stroke:.08px #222;">12/20/2019</div>
<svg style="left:782.4px;top:118.85000000000001px" width="6" height="4" viewBox="0 0 6 4"><path d="M1.3 .7H4.7L3 2.9Z" fill="#222"/></svg>
<div style="left:657.0px;top:125.2px;width:62.200000000000045px;height:9.5px;background:#efefef;border-top:.7px solid #d2d2d2;border-left:.7px solid #d2d2d2;"></div>
<div style="left:719.2px;top:125.2px;width:70.0px;height:9.5px;background:#fff;border-top:.7px solid #d2d2d2;border-left:.7px solid #d2d2d2;"></div>
<div class="t" style="top:126px;height:7.8px;line-height:7.8px;font-size:6.0px;color:#1c1cf0;left:666px;transform:translate(0px,1.0px) scaleX(0.9426) rotate(0.03deg);transform-origin:0 50%;">Contact</div>
<div class="t" style="top:126px;height:7.8px;line-height:7.8px;font-size:6.0px;color:#9b9ba8;left:721px;transform:translate(0.5px,1.0px) scaleX(0.8955) rotate(0.03deg);transform-origin:0 50%;">Doe, John</div>
<svg style="left:781.6px;top:128.95px" width="7" height="3" viewBox="0 0 7 3"><rect x=".6" y="1.2" width="1.1" height="1" fill="#444"/><rect x="2.6" y="1.2" width="1.1" height="1" fill="#444"/><rect x="4.6" y="1.2" width="1.1" height="1" fill="#444"/></svg>
<div style="left:657.0px;top:134.7px;width:62.200000000000045px;height:9.5px;background:#efefef;border-top:.7px solid #d2d2d2;border-left:.7px solid #d2d2d2;"></div>
<div style="left:719.2px;top:134.7px;width:70.0px;height:9.5px;background:#fff;border-top:.7px solid #d2d2d2;border-left:.7px solid #d2d2d2;"></div>
<div class="t" style="top:136px;height:7.8px;line-height:7.8px;font-size:6.0px;color:#1c1cf0;left:666px;transform:translate(0px,0.5px) scaleX(0.911) rotate(0.03deg);transform-origin:0 50%;">Project template</div>
<div class="t" style="top:136px;height:7.8px;line-height:7.8px;font-size:6.0px;color:#9b9ba8;left:721px;transform:translate(0.5px,0.5px) scaleX(0.9412) rotate(0.03deg);transform-origin:0 50%;">Quotation</div>
<svg style="left:782.4px;top:137.85px" width="6" height="4" viewBox="0 0 6 4"><path d="M1.3 .7H4.7L3 2.9Z" fill="#222"/></svg>
<div style="left:657.0px;top:144.2px;width:62.200000000000045px;height:9.5px;background:#efefef;border-top:.7px solid #d2d2d2;border-left:.7px solid #d2d2d2;"></div>
<div style="left:719.2px;top:144.2px;width:70.0px;height:9.5px;background:#fff;border-top:.7px solid #d2d2d2;border-left:.7px solid #d2d2d2;"></div>
<div class="t" style="top:145px;height:7.8px;line-height:7.8px;font-size:6.0px;color:#222;left:666px;transform:translate(0px,1.0px) scaleX(0.909) rotate(0.03deg);transform-origin:0 50%;-webkit-text-stroke:.08px #222;">Contact person</div>
<div class="t" style="top:145px;height:7.8px;line-height:7.8px;font-size:6.0px;color:#222;left:721px;transform:translate(0.5px,1.0px) scaleX(0.8962) rotate(0.03deg);transform-origin:0 50%;-webkit-text-stroke:.08px #222;">Anton Admin</div>
<svg style="left:782.4px;top:147.35px" width="6" height="4" viewBox="0 0 6 4"><path d="M1.3 .7H4.7L3 2.9Z" fill="#222"/></svg>
<div style="left:657.0px;top:153.7px;width:62.200000000000045px;height:9.5px;background:#efefef;border-top:.7px solid #d2d2d2;border-left:.7px solid #d2d2d2;"></div>
<div style="left:719.2px;top:153.7px;width:70.0px;height:9.5px;background:#fff;border-top:.7px solid #d2d2d2;border-left:.7px solid #d2d2d2;"></div>
<div class="t" style="top:155px;height:7.8px;line-height:7.8px;font-size:6.0px;color:#222;left:666px;transform:translate(0px,0.5px) scaleX(0.9168) rotate(0.03deg);transform-origin:0 50%;-webkit-text-stroke:.08px #222;">Representative</div>
<div class="t" style="top:155px;height:7.8px;line-height:7.8px;font-size:6.0px;color:#222;left:721px;transform:translate(0.5px,0.5px) scaleX(0.8719) rotate(0.03deg);transform-origin:0 50%;-webkit-text-stroke:.08px #222;">Ronald Rich</div>
<svg style="left:782.4px;top:156.85px" width="6" height="4" viewBox="0 0 6 4"><path d="M1.3 .7H4.7L3 2.9Z" fill="#222"/></svg>
<div style="left:657.0px;top:163.2px;width:62.200000000000045px;height:9.5px;background:#efefef;border-top:.7px solid #d2d2d2;border-left:.7px solid #d2d2d2;"></div>
<div style="left:719.2px;top:163.2px;width:70.0px;height:9.5px;background:#fff;border-top:.7px solid #d2d2d2;border-left:.7px solid #d2d2d2;"></div>
<div class="t" style="top:164px;height:7.8px;line-height:7.8px;font-size:6.0px;color:#222;left:666px;transform:translate(0px,1.0px) scaleX(0.8889) rotate(0.03deg);transform-origin:0 50%;-webkit-text-stroke:.08px #222;">Trip</div>
<div class="t" style="top:164px;height:7.8px;line-height:7.8px;font-size:6.0px;color:#222;left:721px;transform:translate(0.5px,1.0px) scaleX(0.9025) rotate(0.03deg);transform-origin:0 50%;-webkit-text-stroke:.08px #222;">Wednesday</div>
<svg style="left:782.4px;top:166.35px" width="6" height="4" viewBox="0 0 6 4"><path d="M1.3 .7H4.7L3 2.9Z" fill="#222"/></svg>
<div style="left:657.0px;top:172.7px;width:62.200000000000045px;height:9.5px;background:#efefef;border-top:.7px solid #d2d2d2;border-left:.7px solid #d2d2d2;"></div>
<div style="left:719.2px;top:172.7px;width:70.0px;height:9.5px;background:#fff;border-top:.7px solid #d2d2d2;border-left:.7px solid #d2d2d2;"></div>
<div class="t" style="top:174px;height:7.8px;line-height:7.8px;font-size:6.0px;color:#222;left:666px;transform:translate(0px,0.5px) scaleX(0.9443) rotate(0.03deg);transform-origin:0 50%;-webkit-text-stroke:.08px #222;">Project state</div>
<svg style="left:782.4px;top:175.85px" width="6" height="4" viewBox="0 0 6 4"><path d="M1.3 .7H4.7L3 2.9Z" fill="#222"/></svg>
<div style="left:657.0px;top:182.2px;width:62.200000000000045px;height:9.5px;background:#efefef;border-top:.7px solid #d2d2d2;border-left:.7px solid #d2d2d2;"></div>
<div style="left:719.2px;top:182.2px;width:70.0px;height:9.5px;background:#fff;border-top:.7px solid #d2d2d2;border-left:.7px solid #d2d2d2;"></div>
<div class="t" style="top:183px;height:7.8px;line-height:7.8px;font-size:6.0px;color:#222;left:666px;transform:translate(0px,1.0px) scaleX(0.9662) rotate(0.03deg);transform-origin:0 50%;-webkit-text-stroke:.08px #222;">Project text</div>
<svg style="left:782.4px;top:185.35px" width="6" height="4" viewBox="0 0 6 4"><path d="M1.3 .7H4.7L3 2.9Z" fill="#222"/></svg>
<div style="left:657.0px;top:191.7px;width:62.200000000000045px;height:9.5px;background:#efefef;border-top:.7px solid #d2d2d2;border-left:.7px solid #d2d2d2;"></div>
<div style="left:719.2px;top:191.7px;width:70.0px;height:9.5px;background:#fff;border-top:.7px solid #d2d2d2;border-left:.7px solid #d2d2d2;"></div>
<div class="t" style="top:193px;height:7.8px;line-height:7.8px;font-size:6.0px;color:#222;left:666px;transform:translate(0px,0.5px) scaleX(0.8924) rotate(0.03deg);transform-origin:0 50%;-webkit-text-stroke:.08px #222;">Notes</div>
<svg style="left:782.4px;top:194.85px" width="6" height="4" viewBox="0 0 6 4"><path d="M1.3 .7H4.7L3 2.9Z" fill="#222"/></svg>
<div style="left:649.5999999999999px;top:201.2px;width:139.60000000000008px;height:0.7px;background:#c9c9c9;"></div>
<div style="left:649.5999999999999px;top:201.6px;width:139.60000000000008px;height:10.2px;background:#dddddd;"></div>
<div class="t" style="top:203px;height:7.8px;line-height:7.8px;font-size:6.0px;color:#1c1c1c;font-weight:bold;left:659px;transform:translate(0px,0.75px) scaleX(0.9613) rotate(0.03deg);transform-origin:0 50%;-webkit-text-stroke:.08px #1c1c1c;">Addresses</div>
<svg style="left:781.7px;top:204.1px" width="6" height="5" viewBox="0 0 6 5"><path d="M1.2 1.6L3 3.4L4.8 1.6" fill="none" stroke="#777" stroke-width=".6"/></svg>
<div style="left:649.5999999999999px;top:211.79999999999998px;width:139.60000000000008px;height:0.7px;background:#c9c9c9;"></div>
<div style="left:649.5999999999999px;top:212.2px;width:139.60000000000008px;height:10.2px;background:#dddddd;"></div>
<div class="t" style="top:214px;height:7.8px;line-height:7.8px;font-size:6.0px;color:#1c1c1c;font-weight:bold;left:659px;transform:translate(0px,0.35px) scaleX(0.9808) rotate(0.03deg);transform-origin:0 50%;-webkit-text-stroke:.08px #1c1c1c;">Amounts</div>
<svg style="left:781.7px;top:214.7px" width="6" height="5" viewBox="0 0 6 5"><path d="M1.2 3.4L3 1.6L4.8 3.4" fill="none" stroke="#777" stroke-width=".6"/></svg>
<div style="left:657.0px;top:222.39999999999998px;width:62.200000000000045px;height:9.5px;background:#efefef;border-top:.7px solid #d2d2d2;border-left:.7px solid #d2d2d2;"></div>
<div style="left:719.2px;top:222.39999999999998px;width:70.0px;height:9.5px;background:#fff;border-top:.7px solid #d2d2d2;border-left:.7px solid #d2d2d2;"></div>
<div class="t" style="top:224px;height:7.8px;line-height:7.8px;font-size:6.0px;color:#808080;left:666px;transform:translate(0px,0.2px) scaleX(0.8743) rotate(0.03deg);transform-origin:0 50%;">Purchase price</div>
<div class="t" style="top:224px;height:7.8px;line-height:7.8px;font-size:6.0px;color:#9b9ba8;right:12px;transform:translate(-0.4px,0.2px) scaleX(0.8987) rotate(0.03deg);transform-origin:100% 50%;">$82.22</div>
<div style="left:657.0px;top:231.89999999999998px;width:62.200000000000045px;height:9.5px;background:#efefef;border-top:.7px solid #d2d2d2;border-left:.7px solid #d2d2d2;"></div>
<div style="left:719.2px;top:231.89999999999998px;width:70.0px;height:9.5px;background:#fff;border-top:.7px solid #d2d2d2;border-left:.7px solid #d2d2d2;"></div>
<div class="t" style="top:233px;height:7.8px;line-height:7.8px;font-size:6.0px;color:#1c1cf0;left:666px;transform:translate(0px,0.7px) scaleX(0.8953) rotate(0.03deg);transform-origin:0 50%;">Net price</div>
<div class="t" style="top:233px;height:7.8px;line-height:7.8px;font-size:6.0px;color:#9b9ba8;right:12px;transform:translate(-0.4px,0.7px) scaleX(0.8985) rotate(0.03deg);transform-origin:100% 50%;">$134.15</div>
<div style="left:657.0px;top:241.39999999999998px;width:62.200000000000045px;height:9.5px;background:#efefef;border-top:.7px solid #d2d2d2;border-left:.7px solid #d2d2d2;"></div>
<div style="left:719.2px;top:241.39999999999998px;width:70.0px;height:9.5px;background:#fff;border-top:.7px solid #d2d2d2;border-left:.7px solid #d2d2d2;"></div>
<div class="t" style="top:243px;height:7.8px;line-height:7.8px;font-size:6.0px;color:#1c1cf0;left:666px;transform:translate(0px,0.2px) scaleX(0.8798) rotate(0.03deg);transform-origin:0 50%;">Gross price</div>
<div class="t" style="top:243px;height:7.8px;line-height:7.8px;font-size:6.0px;color:#9b9ba8;right:12px;transform:translate(-0.4px,0.2px) scaleX(0.8985) rotate(0.03deg);transform-origin:100% 50%;">$134.15</div>
<div style="left:657.0px;top:250.89999999999998px;width:62.200000000000045px;height:9.5px;background:#efefef;border-top:.7px solid #d2d2d2;border-left:.7px solid #d2d2d2;"></div>
<div style="left:719.2px;top:250.89999999999998px;width:70.0px;height:9.5px;background:#fff;border-top:.7px solid #d2d2d2;border-left:.7px solid #d2d2d2;"></div>
<div class="t" style="top:252px;height:7.8px;line-height:7.8px;font-size:6.0px;color:#1c1cf0;left:666px;transform:translate(0px,0.7px) scaleX(0.8812) rotate(0.03deg);transform-origin:0 50%;">VAT</div>
<div class="t" style="top:252px;height:7.8px;line-height:7.8px;font-size:6.0px;color:#9b9ba8;right:12px;transform:translate(-0.4px,0.7px) scaleX(0.8991) rotate(0.03deg);transform-origin:100% 50%;">$0.00</div>
<svg style="left:658.4px;top:254.04999999999998px" width="5" height="4" viewBox="0 0 5 4"><path d="M1 .8H4L2.5 2.8Z" fill="#777"/></svg>
<div style="left:657.0px;top:260.4px;width:62.200000000000045px;height:9.5px;background:#efefef;border-top:.7px solid #d2d2d2;border-left:.7px solid #d2d2d2;"></div>
<div style="left:719.2px;top:260.4px;width:70.0px;height:9.5px;background:#fff;border-top:.7px solid #d2d2d2;border-left:.7px solid #d2d2d2;"></div>
<div class="t" style="top:262px;height:7.8px;line-height:7.8px;font-size:6.0px;color:#808080;left:673px;transform:translate(0.7px,0.2px) scaleX(0.9184) rotate(0.03deg);transform-origin:0 50%;">VAT 0%</div>
<div class="t" style="top:262px;height:7.8px;line-height:7.8px;font-size:6.0px;color:#9b9ba8;right:12px;transform:translate(-0.4px,0.2px) scaleX(0.8991) rotate(0.03deg);transform-origin:100% 50%;">$0.00</div>
<div style="left:657.0px;top:269.9px;width:62.200000000000045px;height:9.5px;background:#efefef;border-top:.7px solid #d2d2d2;border-left:.7px solid #d2d2d2;"></div>
<div style="left:719.2px;top:269.9px;width:70.0px;height:9.5px;background:#fff;border-top:.7px solid #d2d2d2;border-left:.7px solid #d2d2d2;"></div>
<div class="t" style="top:271px;height:7.8px;line-height:7.8px;font-size:6.0px;color:#808080;left:673px;transform:translate(0.7px,0.7px) scaleX(0.9184) rotate(0.03deg);transform-origin:0 50%;">VAT 0%</div>
<div class="t" style="top:271px;height:7.8px;line-height:7.8px;font-size:6.0px;color:#9b9ba8;right:12px;transform:translate(-0.4px,0.7px) scaleX(0.8991) rotate(0.03deg);transform-origin:100% 50%;">$0.00</div>
<div style="left:657.0px;top:279.4px;width:62.200000000000045px;height:9.5px;background:#efefef;border-top:.7px solid #d2d2d2;border-left:.7px solid #d2d2d2;"></div>
<div style="left:719.2px;top:279.4px;width:70.0px;height:9.5px;background:#fff;border-top:.7px solid #d2d2d2;border-left:.7px solid #d2d2d2;"></div>
<div class="t" style="top:281px;height:7.8px;line-height:7.8px;font-size:6.0px;color:#808080;left:666px;transform:translate(0px,0.2px) scaleX(0.8825) rotate(0.03deg);transform-origin:0 50%;">Calculated time</div>
<div class="t" style="top:281px;height:7.8px;line-height:7.8px;font-size:6.0px;color:#9b9ba8;right:12px;transform:translate(-0.4px,0.2px) scaleX(0.8326) rotate(0.03deg);transform-origin:100% 50%;">75 min</div>
<div style="left:657.0px;top:288.9px;width:62.200000000000045px;height:9.5px;background:#efefef;border-top:.7px solid #d2d2d2;border-left:.7px solid #d2d2d2;"></div>
<div style="left:719.2px;top:288.9px;width:70.0px;height:9.5px;background:#fff;border-top:.7px solid #d2d2d2;border-left:.7px solid #d2d2d2;"></div>
<div class="t" style="top:290px;height:7.8px;line-height:7.8px;font-size:6.0px;color:#808080;left:666px;transform:translate(0px,0.7px) scaleX(0.839) rotate(0.03deg);transform-origin:0 50%;">Commission</div>
<div class="t" style="top:290px;height:7.8px;line-height:7.8px;font-size:6.0px;color:#9b9ba8;right:12px;transform:translate(-0.4px,0.7px) scaleX(0.8991) rotate(0.03deg);transform-origin:100% 50%;">$0.00</div>
<div style="left:657.0px;top:298.4px;width:62.200000000000045px;height:9.5px;background:#efefef;border-top:.7px solid #d2d2d2;border-left:.7px solid #d2d2d2;"></div>
<div style="left:719.2px;top:298.4px;width:70.0px;height:9.5px;background:#fff;border-top:.7px solid #d2d2d2;border-left:.7px solid #d2d2d2;"></div>
<div class="t" style="top:300px;height:7.8px;line-height:7.8px;font-size:6.0px;color:#222;left:666px;transform:translate(0px,0.2px) scaleX(0.8443) rotate(0.03deg);transform-origin:0 50%;-webkit-text-stroke:.08px #222;">Use SP2</div>
<div style="left:751.7px;top:299.95px;width:6.3px;height:6.3px;background:#fff;border:.6px solid #a5a5a5;"></div>
<div style="left:657.0px;top:307.9px;width:62.200000000000045px;height:9.5px;background:#efefef;border-top:.7px solid #d2d2d2;border-left:.7px solid #d2d2d2;"></div>
<div style="left:719.2px;top:307.9px;width:70.0px;height:9.5px;background:#fff;border-top:.7px solid #d2d2d2;border-left:.7px solid #d2d2d2;"></div>
<div class="t" style="top:309px;height:7.8px;line-height:7.8px;font-size:6.0px;color:#222;left:666px;transform:translate(0px,0.7px) scaleX(0.8841) rotate(0.03deg);transform-origin:0 50%;-webkit-text-stroke:.08px #222;">Use customer disco...</div>
<div style="left:751.7px;top:309.45px;width:6.3px;height:6.3px;background:#fff;border:.6px solid #a5a5a5;"></div>
<svg style="left:751.2px;top:307.65px" width="9" height="9" viewBox="0 0 9 9"><path d="M1.8 4.6L3.4 6.6L6.8 .8" fill="none" stroke="#222" stroke-width=".9"/></svg>
<div style="left:657.0px;top:317.4px;width:62.200000000000045px;height:9.5px;background:#efefef;border-top:.7px solid #d2d2d2;border-left:.7px solid #d2d2d2;"></div>
<div style="left:719.2px;top:317.4px;width:70.0px;height:9.5px;background:#fff;border-top:.7px solid #d2d2d2;border-left:.7px solid #d2d2d2;"></div>
<div class="t" style="top:319px;height:7.8px;line-height:7.8px;font-size:6.0px;color:#222;left:666px;transform:translate(0px,0.2px) scaleX(0.894) rotate(0.03deg);transform-origin:0 50%;-webkit-text-stroke:.08px #222;">Cash discount</div>
<div style="left:751.7px;top:318.95px;width:6.3px;height:6.3px;background:#fff;border:.6px solid #a5a5a5;"></div>
<svg style="left:751.2px;top:317.15px" width="9" height="9" viewBox="0 0 9 9"><path d="M1.8 4.6L3.4 6.6L6.8 .8" fill="none" stroke="#222" stroke-width=".9"/></svg>
<div style="left:657.0px;top:326.9px;width:62.200000000000045px;height:9.5px;background:#efefef;border-top:.7px solid #d2d2d2;border-left:.7px solid #d2d2d2;"></div>
<div style="left:719.2px;top:326.9px;width:70.0px;height:9.5px;background:#fff;border-top:.7px solid #d2d2d2;border-left:.7px solid #d2d2d2;"></div>
<div class="t" style="top:328px;height:7.8px;line-height:7.8px;font-size:6.0px;color:#808080;left:666px;transform:translate(0px,0.7px) scaleX(0.8976) rotate(0.03deg);transform-origin:0 50%;">Contribution margin</div>
<div class="t" style="top:328px;height:7.8px;line-height:7.8px;font-size:6.0px;color:#9b9ba8;right:12px;transform:translate(-0.4px,0.7px) scaleX(0.8987) rotate(0.03deg);transform-origin:100% 50%;">$49.25</div>
<div style="left:657.0px;top:336.4px;width:62.200000000000045px;height:9.5px;background:#efefef;border-top:.7px solid #d2d2d2;border-left:.7px solid #d2d2d2;"></div>
<div style="left:719.2px;top:336.4px;width:70.0px;height:9.5px;background:#fff;border-top:.7px solid #d2d2d2;border-left:.7px solid #d2d2d2;"></div>
<div class="t" style="top:338px;height:7.8px;line-height:7.8px;font-size:6.0px;color:#808080;left:666px;transform:translate(0px,0.2px) scaleX(0.8872) rotate(0.03deg);transform-origin:0 50%;">Rel. Contribution m...</div>
<div class="t" style="top:338px;height:7.8px;line-height:7.8px;font-size:6.0px;color:#9b9ba8;right:12px;transform:translate(-0.4px,0.2px) scaleX(0.9076) rotate(0.03deg);transform-origin:100% 50%;">$39.40 / Hour</div>
<div style="left:657.0px;top:345.9px;width:62.200000000000045px;height:9.5px;background:#efefef;border-top:.7px solid #d2d2d2;border-left:.7px solid #d2d2d2;"></div>
<div style="left:719.2px;top:345.9px;width:70.0px;height:9.5px;background:#fff;border-top:.7px solid #d2d2d2;border-left:.7px solid #d2d2d2;"></div>
<div class="t" style="top:347px;height:7.8px;line-height:7.8px;font-size:6.0px;color:#808080;left:666px;transform:translate(0px,0.7px) scaleX(0.8767) rotate(0.03deg);transform-origin:0 50%;">Contibution margin ...</div>
<div class="t" style="top:347px;height:7.8px;line-height:7.8px;font-size:6.0px;color:#9b9ba8;right:12px;transform:translate(-0.4px,0.7px) scaleX(0.9365) rotate(0.03deg);transform-origin:100% 50%;">37.5 %</div>
<div style="left:657.0px;top:355.4px;width:62.200000000000045px;height:9.5px;background:#efefef;border-top:.7px solid #d2d2d2;border-left:.7px solid #d2d2d2;"></div>
<div style="left:719.2px;top:355.4px;width:70.0px;height:9.5px;background:#fff;border-top:.7px solid #d2d2d2;border-left:.7px solid #d2d2d2;"></div>
<div class="t" style="top:357px;height:7.8px;line-height:7.8px;font-size:6.0px;color:#808080;left:666px;transform:translate(0px,0.2px) scaleX(0.8767) rotate(0.03deg);transform-origin:0 50%;">Contibution margin ...</div>
<div class="t" style="top:357px;height:7.8px;line-height:7.8px;font-size:6.0px;color:#9b9ba8;right:12px;transform:translate(-0.4px,0.2px) scaleX(0.9365) rotate(0.03deg);transform-origin:100% 50%;">59.9 %</div>
<div style="left:657.0px;top:364.9px;width:62.200000000000045px;height:9.5px;background:#efefef;border-top:.7px solid #d2d2d2;border-left:.7px solid #d2d2d2;"></div>
<div style="left:719.2px;top:364.9px;width:70.0px;height:9.5px;background:#fff;border-top:.7px solid #d2d2d2;border-left:.7px solid #d2d2d2;"></div>
<div class="t" style="top:366px;height:7.8px;line-height:7.8px;font-size:6.0px;color:#222;left:666px;transform:translate(0px,0.7px) scaleX(0.892) rotate(0.03deg);transform-origin:0 50%;-webkit-text-stroke:.08px #222;">Show finalcost.</div>
<div style="left:751.7px;top:366.45px;width:6.3px;height:6.3px;background:#fff;border:.6px solid #a5a5a5;"></div>
<div style="left:657.0px;top:374.4px;width:62.200000000000045px;height:9.5px;background:#efefef;border-top:.7px solid #d2d2d2;border-left:.7px solid #d2d2d2;"></div>
<div style="left:719.2px;top:374.4px;width:70.0px;height:9.5px;background:#fff;border-top:.7px solid #d2d2d2;border-left:.7px solid #d2d2d2;"></div>
<div class="t" style="top:376px;height:7.8px;line-height:7.8px;font-size:6.0px;color:#808080;left:666px;transform:translate(0px,0.2px) scaleX(0.8767) rotate(0.03deg);transform-origin:0 50%;">Finalcost. PP</div>
<div class="t" style="top:376px;height:7.8px;line-height:7.8px;font-size:6.0px;color:#9b9ba8;right:12px;transform:translate(-0.4px,0.2px) scaleX(0.8987) rotate(0.03deg);transform-origin:100% 50%;">$82.22</div>
<div style="left:657.0px;top:383.9px;width:62.200000000000045px;height:9.5px;background:#efefef;border-top:.7px solid #d2d2d2;border-left:.7px solid #d2d2d2;"></div>
<div style="left:719.2px;top:383.9px;width:70.0px;height:9.5px;background:#fff;border-top:.7px solid #d2d2d2;border-left:.7px solid #d2d2d2;"></div>
<div class="t" style="top:385px;height:7.8px;line-height:7.8px;font-size:6.0px;color:#808080;left:666px;transform:translate(0px,0.7px) scaleX(0.8672) rotate(0.03deg);transform-origin:0 50%;">Finalcost. Time</div>
<div class="t" style="top:385px;height:7.8px;line-height:7.8px;font-size:6.0px;color:#9b9ba8;right:12px;transform:translate(-0.4px,0.7px) scaleX(0.8326) rotate(0.03deg);transform-origin:100% 50%;">75 min</div>
<div style="left:649.5999999999999px;top:393.4px;width:139.60000000000008px;height:0.7px;background:#c9c9c9;"></div>
<div style="left:649.5999999999999px;top:393.79999999999995px;width:139.60000000000008px;height:10.2px;background:#dddddd;"></div>
<div class="t" style="top:395px;height:7.8px;line-height:7.8px;font-size:6.0px;color:#1c1c1c;font-weight:bold;left:659px;transform:translate(0px,0.95px) scaleX(1.0085) rotate(0.03deg);transform-origin:0 50%;-webkit-text-stroke:.08px #1c1c1c;">Status</div>
<svg style="left:781.7px;top:396.29999999999995px" width="6" height="5" viewBox="0 0 6 5"><path d="M1.2 3.4L3 1.6L4.8 3.4" fill="none" stroke="#777" stroke-width=".6"/></svg>
<div style="left:657.0px;top:404.0px;width:62.200000000000045px;height:9.5px;background:#efefef;border-top:.7px solid #d2d2d2;border-left:.7px solid #d2d2d2;"></div>
<div style="left:719.2px;top:404.0px;width:70.0px;height:9.5px;background:#fff;border-top:.7px solid #d2d2d2;border-left:.7px solid #d2d2d2;"></div>
<div class="t" style="top:405px;height:7.8px;line-height:7.8px;font-size:6.0px;color:#222;left:666px;transform:translate(0px,0.8px) scaleX(0.8328) rotate(0.03deg);transform-origin:0 50%;-webkit-text-stroke:.08px #222;">Finalized</div>
<div style="left:751.7px;top:405.55px;width:6.3px;height:6.3px;background:#fff;border:.6px solid #a5a5a5;"></div>
<div style="left:657.0px;top:413.5px;width:62.200000000000045px;height:9.5px;background:#efefef;border-top:.7px solid #d2d2d2;border-left:.7px solid #d2d2d2;"></div>
<div style="left:719.2px;top:413.5px;width:70.0px;height:9.5px;background:#fff;border-top:.7px solid #d2d2d2;border-left:.7px solid #d2d2d2;"></div>
<div class="t" style="top:415px;height:7.8px;line-height:7.8px;font-size:6.0px;color:#222;left:666px;transform:translate(0px,0.3px) scaleX(0.9305) rotate(0.03deg);transform-origin:0 50%;-webkit-text-stroke:.08px #222;">verified</div>
<div style="left:751.7px;top:415.05px;width:6.3px;height:6.3px;background:#fff;border:.6px solid #a5a5a5;"></div>
<svg style="left:791.4px;top:79px" width="6" height="5" viewBox="0 0 6 5"><path d="M1.4 3.3H4.6L3 1.5Z" fill="#444"/></svg>
<div style="left:792.4px;top:85.6px;width:3.8px;height:265.6px;background:#d9d9d9;border:.7px solid #9f9f9f;border-radius:1.6px;"></div>
<svg style="left:791.4px;top:411px" width="6" height="5" viewBox="0 0 6 5"><path d="M1.4 1.5H4.6L3 3.3Z" fill="#444"/></svg>
<div style="left:102.5px;top:418px;width:697.5px;height:18px;background:#f7f7f7;"></div>
<div class="t" style="top:424px;height:7.8px;line-height:7.8px;font-size:6.0px;color:#222;left:113px;transform:translate(0px,0.15px) scaleX(0.9243) rotate(0.03deg);transform-origin:0 50%;-webkit-text-stroke:.08px #222;">created</div>
<div style="left:168px;top:422.8px;width:88.5px;height:9.8px;background:#fff;border:1px solid #8c8c8c;"></div>
<div class="t" style="top:424px;height:7.8px;line-height:7.8px;font-size:6.0px;color:#222;left:170px;transform:translate(0px,0.15px) scaleX(0.9074) rotate(0.03deg);transform-origin:0 50%;-webkit-text-stroke:.08px #222;">12/20/2019 10:23:55 AM - admin</div>
<div class="t" style="top:424px;height:7.8px;line-height:7.8px;font-size:6.0px;color:#222;left:307px;transform:translate(0px,0.15px) scaleX(0.9036) rotate(0.03deg);transform-origin:0 50%;-webkit-text-stroke:.08px #222;">Modified</div>
<div style="left:342px;top:422.8px;width:88.5px;height:9.8px;background:#fff;border:1px solid #8c8c8c;"></div>
<div class="t" style="top:424px;height:7.8px;line-height:7.8px;font-size:6.0px;color:#222;left:344px;transform:translate(0px,0.15px) scaleX(0.9074) rotate(0.03deg);transform-origin:0 50%;-webkit-text-stroke:.08px #222;">12/20/2019 10:23:55 AM - admin</div>
<div class="t" style="top:424px;height:7.8px;line-height:7.8px;font-size:6.0px;color:#222;left:584px;transform:translate(0.5px,0.15px) scaleX(0.8698) rotate(0.03deg);transform-origin:0 50%;-webkit-text-stroke:.08px #222;">Field info: GE_Adresszeile</div>
<div style="left:0px;top:436px;width:800px;height:14px;background:#f8f8f8;"></div>
<div style="left:0px;top:435px;width:800px;height:0.8px;background:#dcdcdc;"></div>
<div class="t" style="top:438px;height:7.8px;line-height:7.8px;font-size:6.0px;color:#444;left:6px;transform:translate(0.3px,0.45px) scaleX(0.9302) rotate(0.03deg);transform-origin:0 50%;">Projects [23 / 313]</div>
<div class="t" style="top:438px;height:7.8px;line-height:7.8px;font-size:6.0px;color:#2a6fa5;left:63px;transform:translate(0px,0.45px) scaleX(0.9052) rotate(0.03deg);transform-origin:0 50%;">Quotation Q201912/0035</div>
<div style="left:57px;top:447.2px;width:73.5px;height:1.5px;background:#2e7cc4;"></div>
<svg style="left:790px;top:439px" width="8" height="6" viewBox="0 0 8 6"><path d="M2.6 2.2h2.8l-1.4 1.6z" fill="#444"/></svg>
</div></body></html>
